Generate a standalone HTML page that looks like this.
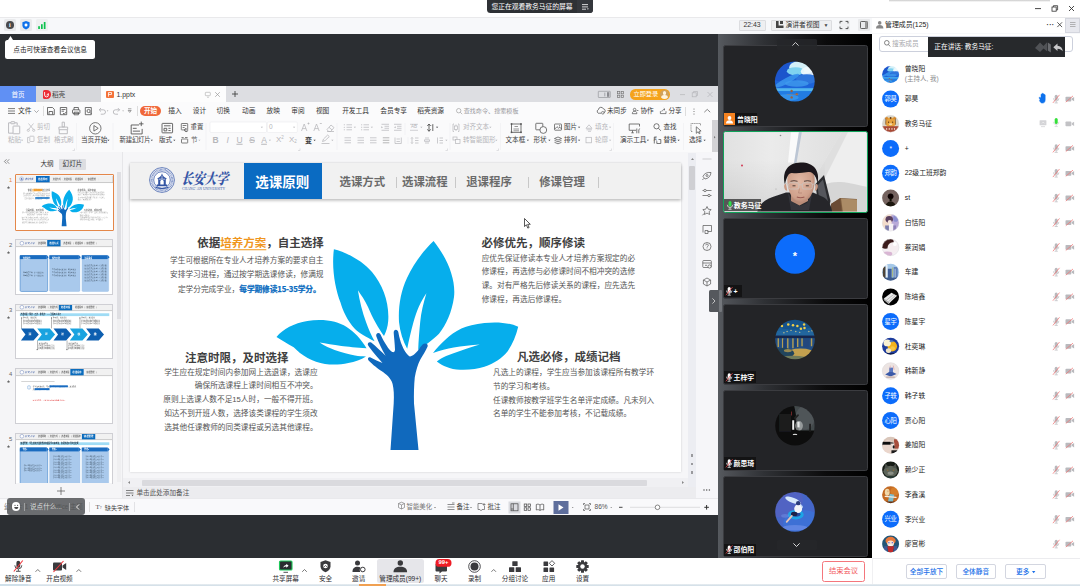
<!DOCTYPE html>
<html lang="zh-CN"><head><meta charset="utf-8"><title>会议</title>
<style>
*{box-sizing:border-box;margin:0;padding:0}
html,body{width:1080px;height:586px;overflow:hidden;background:#fff}
body{position:relative;font-family:"Liberation Sans","Noto Sans CJK SC",sans-serif;color:#222;font-size:6.75px;line-height:1}
.a{position:absolute}
.t{position:absolute;white-space:nowrap;line-height:1}
.c{transform:translate(-50%,-50%)}
.cy{transform:translateY(-50%)}
.r{transform:translate(-100%,-50%)}
svg{position:absolute;overflow:visible}
.g{color:#b9b9bd}
.d{color:#3a3a3e}
</style></head><body>
<div class="a" id="titlebar" style="left:0;top:0;width:1080px;height:17.5px;background:#fff"></div>
<div class="a" style="left:889px;top:0;width:161px;height:2px;background:linear-gradient(#c9c9c9,#fff)"></div>
<div class="a" style="left:487px;top:-3px;width:106px;height:16.3px;background:#2e3135;border-radius:3.5px"></div>
<div class="a" style="left:577px;top:0;width:16px;height:13.3px;background:#34373c;border-radius:0 0 3.5px 0"></div>
<div class="t cy" style="left:491.5px;top:6.8px;color:#fff;font-size:6.8px;letter-spacing:-0.05px">您正在观看教务马征的屏幕</div>
<svg style="left:582px;top:4px" width="7" height="6" viewBox="0 0 7 6"><path d="M0 .6h6M0 2.9h6M0 5.2h4" stroke="#fff" stroke-width=".8" fill="none"/><path d="M5 4.6h1.8L5.9 5.8z" fill="#fff"/></svg>
<svg style="left:1034px;top:4px" width="44" height="10" viewBox="0 0 44 10"><path d="M1 4.6h6" stroke="#333" stroke-width=".9"/><rect x="18" y="3" width="4.2" height="4.2" fill="none" stroke="#333" stroke-width=".8"/><path d="M19.4 3V1.7h4.2v4.2h-1.4" fill="none" stroke="#333" stroke-width=".8"/><path d="M35 2l5 5M40 2l-5 5" stroke="#333" stroke-width=".9"/></svg>
<div class="a" style="left:0;top:-.7px;width:1080px;height:0">
<div class="a" id="toolbar" style="left:0;top:17.5px;width:1080px;height:16.7px;background:#f7f8fa;border-top:1px solid #e9e9eb"></div>
<div class="a" style="left:4px;top:20px;width:11.5px;height:11.5px;background:#e9eaec;border-radius:1.5px"></div>
<div class="a" style="left:20px;top:20px;width:11.5px;height:11.5px;background:#e9eaec;border-radius:1.5px"></div>
<div class="a" style="left:36px;top:20px;width:11.5px;height:11.5px;background:#eef0f1;border-radius:1.5px"></div>
<div class="a" style="left:6px;top:22px;width:7.6px;height:7.6px;border-radius:50%;background:#4a4a4c"></div>
<div class="t c" style="left:9.8px;top:25.9px;color:#fff;font-size:6px;font-weight:bold;font-family:'Liberation Serif',serif">i</div>
<svg style="left:22px;top:21.6px" width="8" height="8.6" viewBox="0 0 8 8.6"><path d="M4 0L7.6 1.3V4.3C7.6 6.4 6 7.9 4 8.6C2 7.9.4 6.4.4 4.3V1.3z" fill="#0e71eb"/><circle cx="4" cy="4.1" r="1.5" fill="#fff"/></svg>
<svg style="left:37.6px;top:22.2px" width="8" height="7" viewBox="0 0 8 7"><rect x=".2" y="4.2" width="1.7" height="2.8" fill="#0cc24e"/><rect x="3" y="2.2" width="1.7" height="4.8" fill="#0cc24e"/><rect x="5.8" y="0" width="1.7" height="7" fill="#0cc24e"/></svg>
<div class="a" style="left:738.5px;top:20.3px;width:27.3px;height:11px;background:#eeeff1;border:0.5px solid #dcdde0;border-radius:1px"></div>
<div class="t c" style="left:752px;top:25.8px;font-size:6.9px;color:#333">22:43</div>
<div class="a" style="left:771.3px;top:20.3px;width:61.2px;height:11px;background:#eeeff1;border:0.5px solid #dcdde0;border-radius:1px"></div>
<svg style="left:776px;top:22px" width="7.5" height="7" viewBox="0 0 7.5 7"><path d="M0 0h2.6v4.4H7.5V7H0z" fill="#444"/><rect x="4" y="0" width="3" height="3" fill="#444"/></svg>
<div class="t cy" style="left:785.5px;top:25.7px;font-size:6.8px;color:#333">演讲者视图</div>
<div class="t c" style="left:826px;top:26px;font-size:5px;color:#444">▼</div>
<div class="a" style="left:838.5px;top:20.3px;width:11.2px;height:11px;background:#eff0f2;border-radius:1px"></div>
<svg style="left:840px;top:21.5px" width="8" height="8" viewBox="0 0 8 8"><path d="M0 2.4V0.4H2.4M5.6 .4H8V2.4M8 5.6V7.6H5.6M2.4 7.6H0V5.6" fill="none" stroke="#444" stroke-width=".9"/></svg>
<div class="a" style="left:857.5px;top:19.8px;width:12px;height:11.5px;background:#e9eaec;border-radius:1px"></div>
<svg style="left:859.5px;top:21.5px" width="8" height="8" viewBox="0 0 8 8"><rect x=".5" y=".5" width="7" height="7" rx=".8" fill="none" stroke="#555" stroke-width=".9"/><rect x="5" y=".5" width="2.5" height="7" fill="#999"/></svg>
<div class="a" style="left:872px;top:18.5px;width:208px;height:15px;background:#fff"></div>
<svg style="left:875.5px;top:21.3px" width="7.4" height="7.4" viewBox="0 0 7.4 7.4"><circle cx="3.7" cy="1.9" r="1.8" fill="#888"/><path d="M0 7.4C0 4.8 1.6 4 3.7 4S7.4 4.8 7.4 7.4z" fill="#888"/></svg>
<div class="t cy" style="left:885px;top:25.6px;font-size:6.9px;color:#222">管理成员(125)</div>
<div class="t c" style="left:1050.5px;top:24.5px;font-size:7px;color:#333;letter-spacing:.3px;font-weight:bold">···</div>
<svg style="left:1056.5px;top:22.3px" width="5.4" height="5.4" viewBox="0 0 5.4 5.4"><path d="M.3 .3l4.8 4.8M5.1 .3L.3 5.1" stroke="#333" stroke-width=".8"/></svg>
<div class="a" style="left:1064.5px;top:18.5px;width:15.5px;height:15px;background:#e7e8ee;border:0.5px solid #d4d6de"></div>
<svg style="left:1069.5px;top:23px" width="5.5" height="5" viewBox="0 0 5.5 5"><path d="M0 .5h5.5M0 2.5h5.5M0 4.5h5.5" stroke="#999" stroke-width=".7"/></svg></div>
<div class="a" id="dark" style="left:0;top:33.5px;width:718px;height:524px;background:#2b2e32"></div>
<div class="a" style="left:5px;top:39.8px;width:90px;height:19px;background:#fff;border-radius:2.5px"></div>
<svg style="left:7.5px;top:36.3px" width="5" height="4" viewBox="0 0 5 4"><path d="M0 4L2.5 0L5 4z" fill="#fff"/></svg>
<div class="t cy" style="left:13.2px;top:49.5px;font-size:6.72px;color:#222">点击可快速查看会议信息</div>
<div class="a" id="wps" style="left:0;top:86.2px;width:718px;height:428.3px;background:#f6f6f8"></div>
<div class="a" style="left:0;top:86.2px;width:718px;height:15.4px;background:#dddee2"></div>
<div class="a" style="left:0;top:86.2px;width:36px;height:15.4px;background:#6090f4"></div>
<div class="t c" style="left:18px;top:94.5px;font-size:6.6px;color:#fff;">首页</div>
<div class="a" style="left:36px;top:86.2px;width:65px;height:15.4px;background:#d6d7db"></div>
<div class="a" style="left:43px;top:90.2px;width:7.6px;height:8.4px;border-radius:1.5px 4.2px 4.2px 1.5px;background:#ec2a34"></div>
<svg style="left:44.3px;top:91.6px" width="5" height="5.4" viewBox="0 0 5 5.4"><path d="M.6 0V3a1.9 1.9 0 0 0 3.8 0V1.6L2.6 3" fill="none" stroke="#fff" stroke-width=".9"/></svg>
<div class="t cy" style="left:52px;top:94.6px;font-size:6.6px;color:#444;">稻壳</div>
<div class="a" style="left:101px;top:86.2px;width:125px;height:15.4px;background:#fdfdfd"></div>
<div class="a" style="left:106px;top:90.6px;width:7.6px;height:7.6px;border-radius:1px;background:#f4733a"></div>
<svg style="left:107.8px;top:92.2px" width="4" height="4.6" viewBox="0 0 4 4.6"><path d="M.5 4.6V.5H3.5V2.5H.5" fill="none" stroke="#fff" stroke-width=".8"/></svg>
<div class="t cy" style="left:116.5px;top:94.6px;font-size:6.9px;color:#333;">1.pptx</div>
<svg style="left:204.5px;top:92px" width="6" height="5.5" viewBox="0 0 6 5.5"><rect x=".3" y=".3" width="5" height="3.4" rx=".6" fill="none" stroke="#aaa" stroke-width=".6"/><path d="M2 5.2h2" stroke="#aaa" stroke-width=".6"/></svg>
<svg style="left:215px;top:92px" width="5" height="5" viewBox="0 0 5 5"><path d="M.2 .2l4.6 4.6M4.8 .2L.2 4.8" stroke="#999" stroke-width=".7"/></svg>
<svg style="left:231.5px;top:91px" width="6" height="6" viewBox="0 0 6 6"><path d="M3 0V6M0 3H6" stroke="#444" stroke-width=".9"/></svg>
<svg style="left:598px;top:90.6px" width="13" height="7" viewBox="0 0 13 7"><rect x=".3" y=".3" width="12" height="6.2" rx=".5" fill="none" stroke="#8a8b90" stroke-width=".6"/><rect x="9" y="1.2" width="2.3" height="4.6" fill="#8a8b90"/><path d="M6.8 1.6V5.4" stroke="#8a8b90" stroke-width=".7"/></svg>
<svg style="left:617px;top:90.8px" width="7" height="7" viewBox="0 0 7 7"><g fill="none" stroke="#777" stroke-width=".7"><rect x=".4" y=".4" width="2.4" height="2.4"/><rect x="4.2" y=".4" width="2.4" height="2.4"/><rect x=".4" y="4.2" width="2.4" height="2.4"/><rect x="4.2" y="4.2" width="2.4" height="2.4"/></g></svg>
<div class="a" style="left:630.3px;top:89px;width:40px;height:10.5px;border-radius:5.3px;background:#f5a31b"></div>
<div class="t cy" style="left:633.5px;top:94.4px;font-size:6.2px;color:#fff;">立即登录</div>
<div class="a" style="left:660px;top:89.8px;width:9px;height:9px;border-radius:50%;background:#cfa15d;overflow:hidden">
<div class="a" style="left:2.7px;top:1.4px;width:3.6px;height:3.6px;border-radius:50%;background:#fff3dc"></div>
<div class="a" style="left:1.2px;top:5.5px;width:6.6px;height:6px;border-radius:50%;background:#fff3dc"></div></div>
<svg style="left:680px;top:90.5px" width="34" height="7" viewBox="0 0 34 7"><g stroke="#b5b6ba" stroke-width=".7" fill="none"><path d="M0 3.6h5"/><rect x="12.2" y="1.8" width="4" height="4"/><path d="M13.5 1.8V.5h4v4h-1.3"/><path d="M27.5 1l5 5M32.5 1l-5 5"/></g></svg>
<div class="a" style="left:0;top:101.7px;width:718px;height:18.5px;background:#fbfbfc"></div>
<svg style="left:8px;top:108px" width="7" height="6" viewBox="0 0 7 6"><path d="M0 .6h7M0 3h7M0 5.4h7" stroke="#444" stroke-width=".7"/></svg>
<div class="t cy" style="left:18px;top:111.3px;font-size:6.75px;color:#333;">文件</div>
<svg style="left:33.5px;top:110px" width="5" height="3" viewBox="0 0 5 3"><path d="M.3 .3L2.5 2.5L4.7 .3" fill="none" stroke="#777" stroke-width=".6"/></svg>
<div class="a" style="left:43px;top:106px;width:.6px;height:10px;background:#ddd"></div>
<svg style="left:0;top:0" width="718" height="586" viewBox="0 0 718 586"><g fill="none" stroke="#444" stroke-width=".75"><path d="M47.5 107.5h5l1.8 1.8v5.4h-6.8z"/><path d="M49 114.5v-3h3.6v3"/><path d="M60.3 107.5h6.4v7.2h-6.4z"/><path d="M61.5 109.5h4M61.5 111.2h2.5M63 113l1.2 1.2 2.2-2.4"/><rect x="72.5" y="109.8" width="7.4" height="3.6" rx=".6"/><path d="M74 109.8v-2.3h4.4v2.3M74 112.2h4.4v2.6H74z"/><path d="M85.3 107.5h6v7.2h-6z"/><circle cx="88.6" cy="111" r="1.6"/><path d="M89.8 112.2l1.6 1.7"/></g><g fill="none" stroke="#a9a9ad" stroke-width=".75"><path d="M99.3 109.8h4a2.2 2.2 0 0 1 0 4.4h-2.5"/><path d="M101 108l-1.8 1.8L101 111.6"/><path d="M119.5 109.8h-4a2.2 2.2 0 0 0 0 4.4h2.5"/><path d="M117.8 108l1.8 1.8-1.8 1.8"/></g><path d="M106.8 110.5h1.6l-.8 1z" fill="#999"/><path d="M122.3 110.5h1.6l-.8 1z" fill="#999"/><path d="M128 108.8h3.4M128.2 110.5h3l-1.5 1.9z" fill="none" stroke="#666" stroke-width=".6"/></svg>
<div class="a" style="left:137px;top:106px;width:.6px;height:10px;background:#ddd"></div>
<div class="a" style="left:139.7px;top:106px;width:21.6px;height:10.2px;border-radius:5.1px;background:#f0683a"></div>
<div class="t c" style="left:150.5px;top:111.2px;font-size:6.6px;color:#fff;font-weight:bold">开始</div>
<div class="t c" style="left:175px;top:111.3px;font-size:6.7px;color:#333;">插入</div>
<div class="t c" style="left:199.5px;top:111.3px;font-size:6.7px;color:#333;">设计</div>
<div class="t c" style="left:223.3px;top:111.3px;font-size:6.7px;color:#333;">切换</div>
<div class="t c" style="left:248.7px;top:111.3px;font-size:6.7px;color:#333;">动画</div>
<div class="t c" style="left:273.3px;top:111.3px;font-size:6.7px;color:#333;">放映</div>
<div class="t c" style="left:298px;top:111.3px;font-size:6.7px;color:#333;">审阅</div>
<div class="t c" style="left:322.6px;top:111.3px;font-size:6.7px;color:#333;">视图</div>
<div class="t c" style="left:355.5px;top:111.3px;font-size:6.7px;color:#333;">开发工具</div>
<div class="t c" style="left:393.7px;top:111.3px;font-size:6.7px;color:#333;">会员专享</div>
<div class="t c" style="left:430.7px;top:111.3px;font-size:6.7px;color:#333;">稻壳资源</div>
<svg style="left:456px;top:107.6px" width="6.5" height="6.5" viewBox="0 0 6.5 6.5"><circle cx="2.7" cy="2.7" r="2.2" fill="none" stroke="#999" stroke-width=".65"/><path d="M4.3 4.3L6.2 6.2" stroke="#999" stroke-width=".65"/></svg>
<div class="t cy" style="left:463.7px;top:111.3px;font-size:6.1px;color:#9a9a9e;">查找命令、搜索模板</div>
<svg style="left:598px;top:107.8px" width="7" height="6.5" viewBox="0 0 7 6.5"><path d="M5.8 4.8a2 2 0 0 0 -.4-3.9 2.6 2.6 0 0 0-5 .8A1.8 1.8 0 0 0 1.8 5.2H3" fill="none" stroke="#444" stroke-width=".7"/><circle cx="4.8" cy="4.8" r="1.3" fill="none" stroke="#444" stroke-width=".6"/></svg>
<div class="t cy" style="left:607px;top:111.3px;font-size:6.6px;color:#333;">未同步</div>
<svg style="left:632px;top:108px" width="6.5" height="6" viewBox="0 0 6.5 6"><circle cx="2.6" cy="1.6" r="1.3" fill="none" stroke="#444" stroke-width=".65"/><path d="M.3 5.7C.3 3.9 1.3 3.3 2.6 3.3S4.9 3.9 4.9 5.7zM4.6 2.5h1.8" fill="none" stroke="#444" stroke-width=".65"/></svg>
<div class="t cy" style="left:640.5px;top:111.3px;font-size:6.6px;color:#333;">协作</div>
<svg style="left:659.5px;top:108px" width="7" height="6" viewBox="0 0 7 6"><path d="M.4 3.2V5.6H6V3.2M1.8 3.6C2.2 2 3.4 1.4 4.6 1.4M3.8 .3L5 1.4 3.8 2.5" fill="none" stroke="#444" stroke-width=".65"/></svg>
<div class="t cy" style="left:668.5px;top:111.3px;font-size:6.6px;color:#333;">分享</div>
<div class="a" style="left:685px;top:106.5px;width:.6px;height:9px;background:#ddd"></div>
<svg style="left:692.5px;top:107.8px" width="2" height="7" viewBox="0 0 2 7"><circle cx="1" cy="1" r=".55" fill="#666"/><circle cx="1" cy="3.5" r=".55" fill="#666"/><circle cx="1" cy="6" r=".55" fill="#666"/></svg>
<svg style="left:703.5px;top:109.3px" width="6.5" height="3.5" viewBox="0 0 6.5 3.5"><path d="M.3 3.2L3.25 .4L6.2 3.2" fill="none" stroke="#555" stroke-width=".7"/></svg>
<div class="a" style="left:0;top:120.2px;width:718px;height:31.8px;background:#fafafb"></div>
<div class="t c" style="left:215.5px;top:140.3px;font-size:8.5px;color:#b6b6ba;font-weight:bold">B</div>
<div class="t c" style="left:227.8px;top:140.3px;font-size:8.5px;color:#b6b6ba;font-style:italic">I</div>
<div class="t c" style="left:239.5px;top:140.3px;font-size:8.5px;color:#b6b6ba;text-decoration:underline">U</div>
<div class="t c" style="left:252px;top:140.3px;font-size:8.5px;color:#b6b6ba;text-decoration:line-through">S</div>
<div class="t c" style="left:264px;top:140.3px;font-size:8.5px;color:#b6b6ba;text-decoration:underline">A</div>
<div class="t cy" style="left:276px;top:140.3px;font-size:8px;color:#b6b6ba;">X<sup style="font-size:4.5px;vertical-align:3px">2</sup></div>
<div class="t cy" style="left:289px;top:140.3px;font-size:8px;color:#b6b6ba;">X<sub style="font-size:4.5px;vertical-align:-1.5px">2</sub></div>
<div class="t c" style="left:308.5px;top:140.2px;font-size:7px;color:#333;font-weight:bold">变</div>
<div class="t c" style="left:414px;top:127px;font-size:4.5px;color:#b6b6ba;">AB</div>
<div class="t cy" style="left:463px;top:127.3px;font-size:6.5px;color:#b6b6ba;">对齐文本</div>
<div class="t cy" style="left:463px;top:140.3px;font-size:6.5px;color:#b6b6ba;">转智能图形</div>
<div class="t c" style="left:655.3px;top:139.6px;font-size:4.5px;color:#555;">A</div>
<svg style="left:0;top:0" width="718" height="586" viewBox="0 0 718 586"><g transform="translate(14.2 128) scale(1.15) translate(-14.2 -128)"><g fill="none" stroke="#b6b6ba" stroke-width=".8"><path d="M11.5 123.5h-2.2v9h4.2"/><path d="M16.8 125.6v-2.1h-2.3"/><rect x="11.3" y="122.5" width="3.4" height="1.8" rx=".4"/><rect x="13.2" y="126.3" width="5.8" height="6.7" rx=".4" fill="#fafafb"/></g></g><path d="M21 139.8h2.2l-1.1 1.3z" fill="#b6b6ba"/><g fill="none" stroke="#b6b6ba" stroke-width=".7"><path d="M28.5 123.5l5 6M33.5 123.5l-5 6"/><circle cx="28.3" cy="130.3" r="1.1"/><circle cx="33.7" cy="130.3" r="1.1"/><rect x="29.8" y="136.2" width="4.2" height="5.3" rx=".5"/><path d="M29.8 142.7h-2.2v-5.3h1.4"/></g><g transform="translate(62.5 128) scale(1.12) translate(-62.5 -128)"><g fill="none" stroke="#b6b6ba" stroke-width=".8"><path d="M62.2 122.8h2v4.2h-2z"/><path d="M59.3 127.2h7.8v2.3h-7.8z"/><path d="M59.6 129.8v3.3h7.2v-3.3"/></g></g><path d="M76.5 123v27" stroke="#efeff1" stroke-width=".6"/><g fill="none" stroke="#555" stroke-width=".8"><circle cx="95.3" cy="128.3" r="5.7"/><path d="M93.9 125.5v5.6l4.3-2.8z"/></g><path d="M107.3 139.8h2.2l-1.1 1.3z" fill="#3c3c40"/><path d="M113 123v27" stroke="#efeff1" stroke-width=".6"/><g transform="translate(137 128) scale(1.12) translate(-137 -128)"><g fill="none" stroke="#555" stroke-width=".8"><path d="M138.8 125.3h-7v8h9.8v-4.5"/><path d="M133.3 128.3h3.4M133.3 130.8h6.4"/><path d="M140.8 122.3v4M138.8 124.3h4"/></g></g><path d="M150.7 139.8h2.2l-1.1 1.3z" fill="#3c3c40"/><g transform="translate(167.3 128) scale(1.1) translate(-167.3 -128)"><g fill="none" stroke="#555" stroke-width=".8"><rect x="162.5" y="123.8" width="9.6" height="8.6" rx=".5"/><path d="M164.3 126h6M164.3 128.3h2.5v2.3h-2.5zM168.3 128.3h2M168.3 130.3h2"/></g></g><path d="M173.2 139.8h2.2l-1.1 1.3z" fill="#3c3c40"/><g fill="none" stroke="#555" stroke-width=".75"><rect x="181.3" y="123.5" width="6.4" height="6.4" rx=".4"/><path d="M182.6 125.5h3.8M182.6 127.5h2"/><path d="M186.5 128.5a1.6 1.6 0 1 0 1.3 1.8" stroke="#444"/></g><g fill="none" stroke="#555" stroke-width=".75"><path d="M181.5 137.5h2.2M185 137.5h2.6"/><rect x="181.5" y="139" width="6.2" height="4" rx=".4"/></g><path d="M198.3 139.8h2.2l-1.1 1.3z" fill="#b6b6ba"/><path d="M206 123v27" stroke="#efeff1" stroke-width=".6"/><rect x="210" y="122" width="56.5" height="10.5" rx="1" fill="#fff" stroke="#ebebee" stroke-width=".6"/><rect x="267.3" y="122" width="30" height="10.5" rx="1" fill="#fff" stroke="#ebebee" stroke-width=".6"/><path d="M260.8 126.8h2.2l-1.1 1.3z" fill="#b6b6ba"/><path d="M293 126.8h2.2l-1.1 1.3z" fill="#b6b6ba"/><g fill="none" stroke="#b6b6ba" stroke-width=".75"><path d="M301.5 131l2.7-7 2.7 7M302.5 128.6h3.4M307.5 123.5h2M308.5 122.5v2"/><path d="M313.8 131l2.7-7 2.7 7M314.8 128.6h3.4M319.8 123.5h2"/><path d="M327 129.5l4-4.5 3 2.6-3.3 3.9h-2.2zM329 127.3l3 2.6M327 131.5h7"/></g><path d="M268.8 139.8h2.2l-1.1 1.3z" fill="#b6b6ba"/><path d="M313.5 139.8h2.2l-1.1 1.3z" fill="#3c3c40"/><g fill="none" stroke="#b6b6ba" stroke-width=".75"><path d="M322.5 141.5l1-2.5 4.2-4 1.6 1.6-4.2 4zM321.5 143.5h8"/></g><path d="M331.3 139.8h2.2l-1.1 1.3z" fill="#b6b6ba"/><path d="M337 123v27" stroke="#efeff1" stroke-width=".6"/><path d="M346.5 124.8h5.5" stroke="#b6b6ba" stroke-width=".7"/><path d="M346.5 127.3h5.5" stroke="#b6b6ba" stroke-width=".7"/><path d="M346.5 129.8h5.5" stroke="#b6b6ba" stroke-width=".7"/><circle cx="344.3" cy="124.8" r=".55" fill="#b6b6ba"/><circle cx="344.3" cy="127.3" r=".55" fill="#b6b6ba"/><circle cx="344.3" cy="129.8" r=".55" fill="#b6b6ba"/><path d="M353.8 126.8h2.2l-1.1 1.3z" fill="#b6b6ba"/><path d="M363.5 124.8h5.5" stroke="#b6b6ba" stroke-width=".7"/><path d="M363.5 127.3h5.5" stroke="#b6b6ba" stroke-width=".7"/><path d="M363.5 129.8h5.5" stroke="#b6b6ba" stroke-width=".7"/><path d="M361 124.8h1.2" stroke="#b6b6ba" stroke-width=".7"/><path d="M361 127.3h1.2" stroke="#b6b6ba" stroke-width=".7"/><path d="M361 129.8h1.2" stroke="#b6b6ba" stroke-width=".7"/><path d="M370.8 126.8h2.2l-1.1 1.3z" fill="#b6b6ba"/><path d="M381.5 124.3h7.5" stroke="#b6b6ba" stroke-width=".7"/><path d="M381.5 130.3h7.5" stroke="#b6b6ba" stroke-width=".7"/><path d="M384.5 126.3h4.5" stroke="#b6b6ba" stroke-width=".7"/><path d="M384.5 128.3h4.5" stroke="#b6b6ba" stroke-width=".7"/><path d="M381.3 126.3l1.7 1-1.7 1z" fill="#b6b6ba"/><path d="M394 124.3h7.5" stroke="#b6b6ba" stroke-width=".7"/><path d="M394 130.3h7.5" stroke="#b6b6ba" stroke-width=".7"/><path d="M397 126.3h4.5" stroke="#b6b6ba" stroke-width=".7"/><path d="M397 128.3h4.5" stroke="#b6b6ba" stroke-width=".7"/><path d="M395.7 126.3l-1.7 1 1.7 1z" fill="#b6b6ba"/><path d="M405 123v12" stroke="#efeff1" stroke-width=".6"/><path d="M410 124.3h8M410 130.3h8" stroke="#b6b6ba" stroke-width=".6"/><path d="M420.3 126.8h2.2l-1.1 1.3z" fill="#b6b6ba"/><g fill="none" stroke="#444" stroke-width=".8"><path d="M429 124v7.2M427.3 126l1.7-2 1.7 2M427.3 129.3l1.7 2 1.7-2"/><path d="M432.8 124.5v6.5M432 125.3l.8-.8" /></g><path d="M436 126.8h2.2l-1.1 1.3z" fill="#3c3c40"/><path d="M344.5 137.8h6.5" stroke="#b6b6ba" stroke-width=".7"/><path d="M344.5 140.3h6.5" stroke="#b6b6ba" stroke-width=".7"/><path d="M344.5 142.8h6.5" stroke="#b6b6ba" stroke-width=".7"/><path d="M357.5 137.8h6.5" stroke="#b6b6ba" stroke-width=".7"/><path d="M357.5 140.3h6.5" stroke="#b6b6ba" stroke-width=".7"/><path d="M357.5 142.8h6.5" stroke="#b6b6ba" stroke-width=".7"/><path d="M370 137.8h6.5" stroke="#b6b6ba" stroke-width=".7"/><path d="M370 140.3h6.5" stroke="#b6b6ba" stroke-width=".7"/><path d="M370 142.8h6.5" stroke="#b6b6ba" stroke-width=".7"/><path d="M382.8 137.8h6.5" stroke="#999" stroke-width=".7"/><path d="M382.8 140.3h6.5" stroke="#999" stroke-width=".7"/><path d="M382.8 142.8h6.5" stroke="#999" stroke-width=".7"/><g fill="none" stroke="#b6b6ba" stroke-width=".7"><path d="M395 137.5v6M401.3 137.5v6M396.5 139h3.4M396.5 141.5h3.4M395 143.5h6.3"/></g><path d="M408 137v7" stroke="#efeff1" stroke-width=".6"/><g fill="none" stroke="#b6b6ba" stroke-width=".7"><path d="M412 137.5v6M411 138.5l1-1 1 1M411 142.5l1 1 1-1"/><path d="M415 138h3.5M415 140.5h3.5M415 143h3.5"/><path d="M425 138h4M425 143h4M424.5 139.8h5v1.6h-5z"/><path d="M437.5 137.5v6"/><path d="M439.5 138h3.5M439.5 140.5h3.5M439.5 143h3.5"/></g><path d="M445.3 139.8h2.2l-1.1 1.3z" fill="#b6b6ba"/><path d="M450 123v27" stroke="#efeff1" stroke-width=".6"/><g fill="none" stroke="#b6b6ba" stroke-width=".7"><path d="M453 124v7.5M459 124v7.5M453 124h1M458 124h1M453 131.5h1M458 131.5h1"/><rect x="454.6" y="126" width="2.8" height="3.4"/><path d="M456 124.5v1.5M456 129.5v1.5"/><rect x="453" y="137" width="4" height="3"/><rect x="455.5" y="139.5" width="4.5" height="4" fill="#fafafb"/></g><path d="M489.3 126.8h2.2l-1.1 1.3z" fill="#b6b6ba"/><path d="M495.3 139.8h2.2l-1.1 1.3z" fill="#b6b6ba"/><path d="M500.5 123v27" stroke="#efeff1" stroke-width=".6"/><g fill="none" stroke="#555" stroke-width=".8"><rect x="511.5" y="124" width="9.5" height="8.3"/><path d="M514.5 126.5h3.5M513.5 129h5.5M513.5 130.8h5.5" stroke-width=".6"/></g><rect x="510.7" y="123.2" width="1.6" height="1.6" fill="#555"/><rect x="510.7" y="131.5" width="1.6" height="1.6" fill="#555"/><rect x="520.2" y="123.2" width="1.6" height="1.6" fill="#555"/><rect x="520.2" y="131.5" width="1.6" height="1.6" fill="#555"/><path d="M526.8 139.8h2.2l-1.1 1.3z" fill="#3c3c40"/><g fill="none" stroke="#555" stroke-width=".8"><rect x="535.8" y="123.3" width="7" height="6.5" rx=".5"/><circle cx="543.3" cy="130" r="3.4" fill="#fafafb"/></g><path d="M548.3 139.8h2.2l-1.1 1.3z" fill="#3c3c40"/><g fill="none" stroke="#555" stroke-width=".75"><rect x="554.5" y="124" width="7" height="6.2" rx=".5"/><path d="M554.8 129l2.2-2.3 1.6 1.5 1.3-1 1.6 1.8"/></g><circle cx="559.6" cy="125.8" r=".6" fill="#555"/><path d="M578 126.8h2.2l-1.1 1.3z" fill="#3c3c40"/><g fill="none" stroke="#555" stroke-width=".75"><path d="M554.5 138.5l3.5-1.5 3.5 1.5-3.5 1.5zM554.5 140.3l3.5 1.5 3.5-1.5M554.5 142.3l3.5 1.5 3.5-1.5"/></g><path d="M578 139.8h2.2l-1.1 1.3z" fill="#3c3c40"/><g fill="none" stroke="#b6b6ba" stroke-width=".7"><path d="M586 128.3l3-3.5 3 3.5zM586.5 129.8h5.5M588 131.3h3"/><rect x="586" y="137.3" width="5.5" height="5.5"/></g><path d="M609 126.8h2.2l-1.1 1.3z" fill="#b6b6ba"/><path d="M609 139.8h2.2l-1.1 1.3z" fill="#b6b6ba"/><path d="M613.5 123v27" stroke="#efeff1" stroke-width=".6"/><g fill="none" stroke="#555" stroke-width=".8"><path d="M636 130.3h-6.8v-6.3h10.3v2.5"/><path d="M633.8 132.8h-2.5M632.5 130.5v2.3"/><path d="M636.8 133.3v-4.8M638.8 133.3v-3.3l.8-1.5"/></g><path d="M646.8 139.8h2.2l-1.1 1.3z" fill="#3c3c40"/><g fill="none" stroke="#555" stroke-width=".8"><circle cx="656.5" cy="126.3" r="2.6"/><path d="M658.5 128.3l2.3 2.5"/><path d="M654.3 143.5v-6.5M654.3 137h2.5M658.5 139.5h2.3v4h-4v-2.3"/></g><path d="M677.5 139.8h2.2l-1.1 1.3z" fill="#3c3c40"/><path d="M683.5 123v27" stroke="#efeff1" stroke-width=".6"/><g fill="none" stroke="#555" stroke-width=".7"><path d="M692.3 131.5h-1.3v-8h9.5v2.5" stroke-dasharray="1.2 .9"/><path d="M696.3 126.8v6.5l1.7-1.5 1.2 2 .9-.5-1.1-2 2.1-.3z" stroke-width=".75"/></g><path d="M703.5 139.8h2.2l-1.1 1.3z" fill="#3c3c40"/><path d="M74.5 148.5v2h-2" fill="none" stroke="#c4c4c8" stroke-width=".5"/><path d="M300 148.5v2h-2" fill="none" stroke="#c4c4c8" stroke-width=".5"/><path d="M447.5 148.5v2h-2" fill="none" stroke="#c4c4c8" stroke-width=".5"/><path d="M498.5 148.5v2h-2" fill="none" stroke="#c4c4c8" stroke-width=".5"/><path d="M611.5 148.5v2h-2" fill="none" stroke="#c4c4c8" stroke-width=".5"/></svg>
<div class="t cy" style="left:8px;top:140.3px;font-size:6.6px;color:#b6b6ba;">粘贴</div>
<div class="t cy" style="left:37px;top:127.3px;font-size:6.5px;color:#b6b6ba;">剪切</div>
<div class="t cy" style="left:37px;top:140.3px;font-size:6.5px;color:#b6b6ba;">复制</div>
<div class="t cy" style="left:54px;top:140.3px;font-size:6.5px;color:#b6b6ba;">格式刷</div>
<div class="t cy" style="left:81px;top:140.3px;font-size:6.6px;color:#3c3c40;">当页开始</div>
<div class="t cy" style="left:119.5px;top:140.3px;font-size:6.4px;color:#3c3c40;letter-spacing:-.2px">新建幻灯片</div>
<div class="t cy" style="left:159px;top:140.3px;font-size:6.6px;color:#3c3c40;">版式</div>
<div class="t cy" style="left:190.5px;top:127.3px;font-size:6.4px;color:#3c3c40;">重置</div>
<div class="t cy" style="left:191px;top:140.3px;font-size:6.5px;color:#666;">节</div>
<div class="t cy" style="left:269px;top:127.3px;font-size:6.5px;color:#b6b6ba;">0</div>
<div class="t cy" style="left:505.5px;top:140.3px;font-size:6.6px;color:#3c3c40;">文本框</div>
<div class="t cy" style="left:533.5px;top:140.3px;font-size:6.6px;color:#3c3c40;">形状</div>
<div class="t cy" style="left:564px;top:127.3px;font-size:6.5px;color:#3c3c40;">图片</div>
<div class="t cy" style="left:564px;top:140.3px;font-size:6.5px;color:#3c3c40;">排列</div>
<div class="t cy" style="left:595px;top:127.3px;font-size:6.5px;color:#b6b6ba;">填充</div>
<div class="t cy" style="left:595px;top:140.3px;font-size:6.5px;color:#b6b6ba;">轮廓</div>
<div class="t cy" style="left:620px;top:140.3px;font-size:6.6px;color:#3c3c40;">演示工具</div>
<div class="t cy" style="left:663.5px;top:127.3px;font-size:6.5px;color:#3c3c40;">查找</div>
<div class="t cy" style="left:663.5px;top:140.3px;font-size:6.5px;color:#3c3c40;">替换</div>
<div class="t cy" style="left:689px;top:140.3px;font-size:6.6px;color:#3c3c40;">选择</div></div>
<div class="a" style="left:711.5px;top:120.2px;width:6.5px;height:31.8px;background:#d2d2d5"></div>
<svg style="left:714.2px;top:136px" width="1.5" height="2.5" viewBox="0 0 1.5 2.5"><path d="M0 0l1.5 1.25L0 2.5z" fill="#777"/></svg>
<div class="a" style="left:0;top:152px;width:122.5px;height:347px;background:#f5f5f7;border-right:.7px solid #e6e6e9"></div>
<svg style="left:3.5px;top:158.5px" width="5.5" height="5" viewBox="0 0 5.5 5"><path d="M2.5 .3L.4 2.5l2.1 2.2M5.2 .3L3.1 2.5l2.1 2.2" fill="none" stroke="#555" stroke-width=".65"/></svg>
<div class="t c" style="left:47px;top:164.2px;font-size:6.6px;color:#333;">大纲</div>
<div class="a" style="left:58.8px;top:158.6px;width:27.4px;height:11px;background:#dcdde1;border-radius:1px"></div>
<div class="t c" style="left:72.5px;top:164.2px;font-size:6.6px;color:#333;">幻灯片</div>
<div class="a" style="left:117px;top:172px;width:3.5px;height:310px;background:#efeff1"></div>
<div class="a" style="left:117px;top:172px;width:3.5px;height:147px;background:#dfdfe3"></div>
<div class="a" style="left:16px;top:175.5px;width:96.6px;height:54.3px;overflow:hidden;background:#fff">
<div class="a" style="left:0;top:0;width:551px;height:309px;transform-origin:0 0;transform:scale(0.17532)">
<div class="a" style="left:-130px;top:-163px;width:718px;height:586px">
<svg style="left:0;top:0" width="718" height="586" viewBox="0 0 718 586"><g>
<path d="M276.5 337C283 329 294 323.5 307.3 321.1C316 319.6 326 319.8 334.6 321.7C343 323.8 351 329 357 335.5C361 340 364 344 366.5 348.2C357 347.5 347 346.8 341.4 346C333 344.8 326 343.6 319.6 342.6C325 346 330 348.5 334.6 350C342 352.6 349 354.4 355 355.5C359 356.1 362 356.4 366 356.4C361 359.5 355 361.6 348.3 363C341 364.6 333 365 325 364C313 362.5 301 355 293.7 347.3C287 343.5 281 340 276.5 337Z" fill="#06aeec"/>
<path d="M518.2 326.8C509 322.6 497 321.6 484.4 323C475 324.2 467 326.2 461.4 328.4C455 331.5 450 335.3 446.1 339.1C441 344 436.5 348.5 433 352.9C440 350.5 447 348.8 453.7 347.6C462 346 471 345 479.8 344.5C473 346.5 467 348.5 461.4 350.6C456 352.6 451 354.2 446.1 356C442.5 357.6 439.5 359.5 436.8 361.4C441 364.5 443.5 365.8 446.1 366.8C451 369 456 370 461.4 369.8C470 370 478 368.8 484.4 366.8C494 363.5 502 358 507.5 351.4C512.5 344.5 516 336 518.2 326.8Z" fill="#06aeec"/>
<path d="M333.9 249.3C345 252 362 260 372 272C383 285 389.5 303 388.2 321C387.8 327 386 332 384 336.1C379 329 372.5 318 368 307C365 300 361 295 357.9 290.2C359.5 301 362.5 312 366 322C368.5 329 371.5 336 374.6 341.2C366 337 359 333 355 329C347 320 343 311 340.5 302.5C335 288 331.5 268 333.9 249.3Z" fill="#06aeec"/>
<path d="M433.6 241C424 250 414 263 407 278C400.5 292 398.2 307 399 322C400 332 403 341 407.2 348.7C409 340 411 331 413.5 322C416.5 311 421 301 426.4 293.3C423.5 303 421 313 420.2 322C419.3 331 418.5 341 418.2 349.9C424 346 433 340 439 333.8C446 325 452 312 454 297C456 280 448 259 433.6 241Z" fill="#06aeec"/>
<path d="M390.5 450L393.7 403.5C394.2 395 393.8 389 392.6 384C391 378 386.5 374.5 381.5 371C378.5 369 372.5 364.5 368.6 360.4C367 358.6 368.6 356.4 370.6 357.4C374.5 359.5 378.5 361.5 382.5 363C377.5 357.5 371.5 350.5 368.2 345.6C366.8 343.2 369.2 341.2 371.2 342.6C376 346.5 381 351.5 385.6 355.8C382 349.5 378.5 342.5 376.3 336.2C375.4 333.2 378.8 331.8 380.4 334.2C382.5 338.5 384.5 342.5 386.6 345.4C388.2 348 390 350.5 392.2 352C394 352.6 395 351.5 395 349.5C394.8 343.5 394 337.5 393.7 332.8C393.5 328.9 397.8 328.7 398.4 332.4C399.2 337 400.4 341.5 402.2 345.8C403.8 349.8 406 353.8 409.2 356.3C412 357 415.5 353.5 418 350.5C419.8 348.2 421.2 346 422.6 344.6C424.6 342.4 428.6 343.6 427.6 346.6C425.8 351 422.6 355.5 420.2 359.8C418 364 416 370.5 414.8 377.3C414 385 413.8 394 414 403.5L418.5 450Z" fill="#1069bd"/>
</g></svg>
<div class="a" style="left:130px;top:163px;width:551px;height:35.8px;background:#f1f1f1;box-shadow:0 1.5px 3px rgba(0,0,0,.28)"></div>
<svg style="left:149.4px;top:166.6px" width="26" height="26" viewBox="0 0 26 26"><circle cx="13" cy="13" r="12.4" fill="#fbfbfd" stroke="#3f5ea8" stroke-width=".8"/><circle cx="13" cy="13" r="10.3" fill="none" stroke="#6f86c0" stroke-width="2.2" stroke-dasharray=".7 .55"/><circle cx="13" cy="13" r="8.3" fill="#fff" stroke="#3f5ea8" stroke-width=".8"/><path d="M13 6.2c-.6 2.5-2.3 4.2-4.8 5.3l1 .9v5.2h-1.4v1.6h10.4v-1.6h-1.4v-5.2l1-.9c-2.5-1.1-4.2-2.8-4.8-5.3z" fill="#3455a4"/><path d="M11.3 17.6v-3.2a1.7 1.7 0 0 1 3.4 0v3.2z" fill="#fff"/><path d="M9.8 12.2h6.4M13 8.5v3.5" stroke="#fff" stroke-width=".6"/><path d="M6.5 20.2q6.5 2.5 13 0" stroke="#3455a4" stroke-width="1.1" fill="none"/></svg>
<div class="t" style="left:181.5px;top:171px;font-size:11.6px;color:#3556a6;font-family:'Noto Serif CJK SC',serif;font-weight:900;font-style:italic;letter-spacing:.15px;transform-origin:0 0;transform:scale(1,1.28) skewX(-6deg)">长安大学</div>
<div class="t cy" style="left:182px;top:189.7px;font-size:3.7px;color:#3f5ea8;font-family:'Liberation Serif',serif;letter-spacing:.02px">CHANG' AN UNIVERSITY</div>
<div class="a" style="left:243.8px;top:163px;width:77.8px;height:35.8px;background:#0a6bc2"></div>
<div class="t c" style="left:282.2px;top:182.6px;font-size:13.5px;color:#fff;font-weight:bold">选课原则</div>
<div class="t c" style="left:362.3px;top:183px;font-size:11.4px;color:#6a6a6a;font-weight:bold">选课方式</div>
<div class="t c" style="left:424.8px;top:183px;font-size:11.4px;color:#6a6a6a;font-weight:bold">选课流程</div>
<div class="t c" style="left:489px;top:183px;font-size:11.4px;color:#6a6a6a;font-weight:bold">退课程序</div>
<div class="t c" style="left:562px;top:183px;font-size:11.4px;color:#6a6a6a;font-weight:bold">修课管理</div>
<div class="a" style="left:395.95px;top:177px;width:.7px;height:10.5px;background:#c8c8c8"></div>
<div class="a" style="left:455.34999999999997px;top:177px;width:.7px;height:10.5px;background:#c8c8c8"></div>
<div class="a" style="left:527.85px;top:177px;width:.7px;height:10.5px;background:#c8c8c8"></div>
<div class="a" style="left:597.9499999999999px;top:177px;width:.7px;height:10.5px;background:#c8c8c8"></div>
<div class="a" style="left:0;top:0;width:718px;height:586px;opacity:.72">
<div class="t r" style="left:323.8px;top:243.8px;font-size:11.5px;color:#404040;font-weight:bold;letter-spacing:0px">依据<span style="color:#f0961e;text-decoration:underline;text-decoration-thickness:.8px;text-underline-offset:1.5px">培养方案</span>，自主选择</div>
<div class="t r" style="left:323.5px;top:261px;font-size:7.68px;color:#555">学生可根据所在专业人才培养方案的要求自主</div>
<div class="t r" style="left:323.5px;top:274.7px;font-size:7.68px;color:#555">安排学习进程，通过按学期选课修读，修满规</div>
<div class="t r" style="left:320.5px;top:289.2px;font-size:7.68px;color:#555">定学分完成学业，<span style="color:#0b6cc0;font-weight:bold;font-size:7.7px;letter-spacing:-.1px;font-family:Noto Sans CJK SC,sans-serif;-webkit-text-stroke:.25px #0b6cc0">每学期修读15-35学分。</span></div>
<div class="t cy" style="left:481.5px;top:244px;font-size:11.5px;color:#404040;font-weight:bold;letter-spacing:0px">必修优先，顺序修读</div>
<div class="t cy" style="left:481.7px;top:258.6px;font-size:7.68px;color:#555">应优先保证修读本专业人才培养方案规定的必</div>
<div class="t cy" style="left:481.7px;top:272.3px;font-size:7.68px;color:#555">修课程，再选修与必修课时间不相冲突的选修</div>
<div class="t cy" style="left:481.7px;top:286px;font-size:7.68px;color:#555">课。对有严格先后修读关系的课程，应先选先</div>
<div class="t cy" style="left:481.7px;top:299.70000000000005px;font-size:7.68px;color:#555">修课程，再选后修课程。</div>
<div class="t r" style="left:288.6px;top:358.7px;font-size:11.5px;color:#404040;font-weight:bold;letter-spacing:0px">注意时限，及时选择</div>
<div class="t r" style="left:317.6px;top:372.7px;font-size:7.68px;color:#555">学生应在规定时间内参加网上选退课，选课应</div>
<div class="t r" style="left:317.6px;top:386.4px;font-size:7.68px;color:#555">确保所选课程上课时间相互不冲突。</div>
<div class="t r" style="left:317.6px;top:400.09999999999997px;font-size:7.68px;color:#555">原则上选课人数不足15人时，一般不得开班。</div>
<div class="t r" style="left:317.6px;top:413.79999999999995px;font-size:7.68px;color:#555">如达不到开班人数，选择该类课程的学生须改</div>
<div class="t r" style="left:317.6px;top:427.5px;font-size:7.68px;color:#555">选其他任课教师的同类课程或另选其他课程。</div>
<div class="t cy" style="left:517px;top:358.2px;font-size:11.5px;color:#404040;font-weight:bold;letter-spacing:0px">凡选必修，成绩记档</div>
<div class="t cy" style="left:493px;top:373px;font-size:7.68px;color:#555">凡选上的课程，学生应当参加该课程所有教学环</div>
<div class="t cy" style="left:493px;top:386.75px;font-size:7.68px;color:#555">节的学习和考核。</div>
<div class="t cy" style="left:493px;top:400.5px;font-size:7.68px;color:#555">任课教师按教学班学生名单评定成绩。凡未列入</div>
<div class="t cy" style="left:493px;top:414.25px;font-size:7.68px;color:#555">名单的学生不能参加考核，不记载成绩。</div></div>
<div class="a" style="left:230px;top:236px;width:50px;height:13px;background:#f0961e;opacity:.85"></div>
<div class="a" style="left:240px;top:283px;width:82px;height:10px;background:#0b6cc0;opacity:.8"></div></div></div></div>
<div class="a" style="left:14.7px;top:174.1px;width:99.2px;height:57.2px;border:1.4px solid #e4874a;border-radius:1px"></div>
<div class="a" style="left:16px;top:239.9px;width:96.6px;height:54.3px;overflow:hidden;background:#fff">
<div class="a" style="left:0;top:0;width:551px;height:309px;transform-origin:0 0;transform:scale(0.17532)">
<div class="a" style="left:-130px;top:-163px;width:718px;height:586px">
<div class="a" style="left:130px;top:163px;width:551px;height:35.8px;background:#f1f1f1;box-shadow:0 2px 4px rgba(0,0,0,.25)"></div>
<div class="a" style="left:152px;top:169.5px;width:23px;height:23px;border-radius:50%;border:2px solid #3b5ba5;background:#fff"></div>
<div class="t cy" style="left:180.5px;top:180px;font-size:14px;color:#3b5ba5;font-family:'Noto Serif CJK SC',serif;font-weight:bold;font-style:italic">长安大学</div>
<div class="t cy" style="left:256px;top:182px;font-size:11.4px;color:#666;font-weight:bold">选课原则</div>
<div class="a" style="left:312px;top:177px;width:1.5px;height:10.5px;background:#999"></div>
<div class="a" style="left:308px;top:163px;width:76px;height:35.8px;background:#0b6cbd"></div>
<div class="t cy" style="left:319px;top:182px;font-size:13.4px;color:#fff;font-weight:bold">选课方式</div>
<div class="t cy" style="left:400px;top:182px;font-size:11.4px;color:#666;font-weight:bold">选课流程</div>
<div class="a" style="left:456px;top:177px;width:1.5px;height:10.5px;background:#999"></div>
<div class="t cy" style="left:466px;top:182px;font-size:11.4px;color:#666;font-weight:bold">退课程序</div>
<div class="a" style="left:522px;top:177px;width:1.5px;height:10.5px;background:#999"></div>
<div class="t cy" style="left:532px;top:182px;font-size:11.4px;color:#666;font-weight:bold">修课管理</div>
<div class="a" style="left:588px;top:177px;width:1.5px;height:10.5px;background:#999"></div>
<div class="a" style="left:152px;top:250px;width:160px;height:208px;background:#a9c9ec;border:3px solid #2a74c4;border-radius:8px"></div>
<div class="a" style="left:152px;top:250px;width:152px;height:22px;background:#1a6cc0"></div>
<div class="a" style="left:304px;top:250px;width:0;height:0;border-left:12px solid #1a6cc0;border-top:11px solid transparent;border-bottom:11px solid transparent"></div>
<div class="a" style="left:320px;top:250px;width:176px;height:208px;background:#a9c9ec;border:1.5px solid #9fc3ea;border-radius:8px"></div>
<div class="a" style="left:320px;top:250px;width:168px;height:22px;background:#1a6cc0"></div>
<div class="a" style="left:488px;top:250px;width:0;height:0;border-left:12px solid #1a6cc0;border-top:11px solid transparent;border-bottom:11px solid transparent"></div>
<div class="a" style="left:505px;top:250px;width:155px;height:208px;background:#a9c9ec;border:1.5px solid #9fc3ea;border-radius:8px"></div>
<div class="a" style="left:505px;top:250px;width:147px;height:22px;background:#1a6cc0"></div>
<div class="a" style="left:652px;top:250px;width:0;height:0;border-left:12px solid #1a6cc0;border-top:11px solid transparent;border-bottom:11px solid transparent"></div>
<div class="t cy" style="left:168px;top:270px;font-size:11px;color:#fff;font-weight:bold">选课操作</div>
<div class="t cy" style="left:336px;top:270px;font-size:11px;color:#fff;font-weight:bold">操作步骤</div>
<div class="t cy" style="left:520px;top:270px;font-size:11px;color:#fff;font-weight:bold">注意事项</div>
<div class="t cy" style="left:170px;top:350px;font-size:9px;color:#345">登录教务系统，进入选课界面</div>
<div class="t cy" style="left:170px;top:366px;font-size:9px;color:#345">登录教务系统，进入选课界面</div>
<div class="t cy" style="left:336px;top:330px;font-size:9px;color:#345">查看本学期可选课程，按要求选课</div>
<div class="t cy" style="left:336px;top:348px;font-size:9px;color:#345">查看本学期可选课程，按要求选课</div>
<div class="t cy" style="left:336px;top:366px;font-size:9px;color:#345">查看本学期可选课程，按要求选课</div>
<div class="t cy" style="left:520px;top:310px;font-size:9px;color:#345">选课结束后请核对个人课表信息</div>
<div class="t cy" style="left:520px;top:327px;font-size:9px;color:#345">选课结束后请核对个人课表信息</div>
<div class="t cy" style="left:520px;top:344px;font-size:9px;color:#345">选课结束后请核对个人课表信息</div>
<div class="t cy" style="left:520px;top:361px;font-size:9px;color:#345">选课结束后请核对个人课表信息</div>
<div class="t cy" style="left:520px;top:378px;font-size:9px;color:#345">选课结束后请核对个人课表信息</div>
<div class="t cy" style="left:520px;top:395px;font-size:9px;color:#345">选课结束后请核对个人课表信息</div></div></div></div>
<div class="a" style="left:16px;top:304.4px;width:96.6px;height:54.3px;overflow:hidden;background:#fff">
<div class="a" style="left:0;top:0;width:551px;height:309px;transform-origin:0 0;transform:scale(0.17532)">
<div class="a" style="left:-130px;top:-163px;width:718px;height:586px">
<div class="a" style="left:130px;top:163px;width:551px;height:35.8px;background:#f1f1f1;box-shadow:0 2px 4px rgba(0,0,0,.25)"></div>
<div class="a" style="left:152px;top:169.5px;width:23px;height:23px;border-radius:50%;border:2px solid #3b5ba5;background:#fff"></div>
<div class="t cy" style="left:180.5px;top:180px;font-size:14px;color:#3b5ba5;font-family:'Noto Serif CJK SC',serif;font-weight:bold;font-style:italic">长安大学</div>
<div class="t cy" style="left:256px;top:182px;font-size:11.4px;color:#666;font-weight:bold">选课原则</div>
<div class="a" style="left:312px;top:177px;width:1.5px;height:10.5px;background:#999"></div>
<div class="t cy" style="left:322px;top:182px;font-size:11.4px;color:#666;font-weight:bold">选课方式</div>
<div class="a" style="left:378px;top:177px;width:1.5px;height:10.5px;background:#999"></div>
<div class="a" style="left:374px;top:163px;width:76px;height:35.8px;background:#0b6cbd"></div>
<div class="t cy" style="left:385px;top:182px;font-size:13.4px;color:#fff;font-weight:bold">选课流程</div>
<div class="t cy" style="left:466px;top:182px;font-size:11.4px;color:#666;font-weight:bold">退课程序</div>
<div class="a" style="left:522px;top:177px;width:1.5px;height:10.5px;background:#999"></div>
<div class="t cy" style="left:532px;top:182px;font-size:11.4px;color:#666;font-weight:bold">修课管理</div>
<div class="a" style="left:588px;top:177px;width:1.5px;height:10.5px;background:#999"></div>
<div class="a" style="left:152px;top:216px;width:510px;height:16px;background:#9fdcf5"></div>
<div class="t cy" style="left:156px;top:224px;font-size:10px;color:#123;font-weight:bold">选课流程（预选、正选、补退选）——全程网上进行</div>
<div class="a" style="left:160px;top:240px;width:5px;height:5px;background:#222"></div>
<div class="a" style="left:162px;top:244px;width:1.5px;height:58px;background:#333"></div>
<div class="t cy" style="left:170px;top:243px;font-size:9px;color:#222">第1阶段：选课说明</div>
<div class="t cy" style="left:170px;top:255px;font-size:7px;color:#444">学生按规定时间登录系统完成选课</div>
<div class="t cy" style="left:170px;top:265px;font-size:7px;color:#444">学生按规定时间登录系统完成选课</div>
<div class="t cy" style="left:170px;top:275px;font-size:7px;color:#444">学生按规定时间登录系统完成选课</div>
<div class="a" style="left:330px;top:240px;width:5px;height:5px;background:#222"></div>
<div class="a" style="left:332px;top:244px;width:1.5px;height:58px;background:#333"></div>
<div class="t cy" style="left:340px;top:243px;font-size:9px;color:#222">第2阶段：选课说明</div>
<div class="t cy" style="left:340px;top:255px;font-size:7px;color:#444">学生按规定时间登录系统完成选课</div>
<div class="t cy" style="left:340px;top:265px;font-size:7px;color:#444">学生按规定时间登录系统完成选课</div>
<div class="t cy" style="left:340px;top:275px;font-size:7px;color:#444">学生按规定时间登录系统完成选课</div>
<div class="a" style="left:492px;top:240px;width:5px;height:5px;background:#222"></div>
<div class="a" style="left:494px;top:244px;width:1.5px;height:58px;background:#333"></div>
<div class="t cy" style="left:502px;top:243px;font-size:9px;color:#222">第3阶段：选课说明</div>
<div class="t cy" style="left:502px;top:255px;font-size:7px;color:#444">学生按规定时间登录系统完成选课</div>
<div class="t cy" style="left:502px;top:265px;font-size:7px;color:#444">学生按规定时间登录系统完成选课</div>
<div class="t cy" style="left:502px;top:275px;font-size:7px;color:#444">学生按规定时间登录系统完成选课</div>
<svg style="left:0;top:0" width="718" height="586" viewBox="0 0 718 586"><path d="M158 303h72l30 34-30 34h-72l26-34z" fill="#0e5fb0"/><path d="M251 303h72l30 34-30 34h-72l26-34z" fill="#1aa3e0"/><path d="M344 303h72l30 34-30 34h-72l26-34z" fill="#0e5fb0"/><path d="M437 303h72l30 34-30 34h-72l26-34z" fill="#1aa3e0"/><path d="M530 303h72l30 34-30 34h-72l26-34z" fill="#0e5fb0"/></svg>
<div class="t c" style="left:210px;top:337px;font-size:16px;color:#fff;font-weight:bold">预</div>
<div class="t c" style="left:303px;top:337px;font-size:16px;color:#fff;font-weight:bold">正</div>
<div class="t c" style="left:396px;top:337px;font-size:16px;color:#fff;font-weight:bold">补</div>
<div class="t c" style="left:489px;top:337px;font-size:16px;color:#fff;font-weight:bold">核</div>
<div class="t c" style="left:582px;top:337px;font-size:16px;color:#fff;font-weight:bold">缴</div>
<div class="a" style="left:250px;top:371px;width:1.5px;height:52px;background:#333"></div>
<div class="a" style="left:248px;top:421px;width:5px;height:5px;background:#222"></div>
<div class="t cy" style="left:258px;top:386px;font-size:9px;color:#222">选课结果查询</div>
<div class="t cy" style="left:258px;top:399px;font-size:7px;color:#444">核对课表并按时缴纳相关费用</div>
<div class="t cy" style="left:258px;top:409px;font-size:7px;color:#444">核对课表并按时缴纳相关费用</div>
<div class="t cy" style="left:258px;top:419px;font-size:7px;color:#444">核对课表并按时缴纳相关费用</div>
<div class="a" style="left:420px;top:371px;width:1.5px;height:52px;background:#333"></div>
<div class="a" style="left:418px;top:421px;width:5px;height:5px;background:#222"></div>
<div class="t cy" style="left:428px;top:386px;font-size:9px;color:#222">选课结果查询</div>
<div class="t cy" style="left:428px;top:399px;font-size:7px;color:#444">核对课表并按时缴纳相关费用</div>
<div class="t cy" style="left:428px;top:409px;font-size:7px;color:#444">核对课表并按时缴纳相关费用</div>
<div class="t cy" style="left:428px;top:419px;font-size:7px;color:#444">核对课表并按时缴纳相关费用</div></div></div></div>
<div class="a" style="left:16px;top:368.9px;width:96.6px;height:54.3px;overflow:hidden;background:#fff">
<div class="a" style="left:0;top:0;width:551px;height:309px;transform-origin:0 0;transform:scale(0.17532)">
<div class="a" style="left:-130px;top:-163px;width:718px;height:586px">
<div class="a" style="left:130px;top:163px;width:551px;height:35.8px;background:#f1f1f1;box-shadow:0 2px 4px rgba(0,0,0,.25)"></div>
<div class="a" style="left:152px;top:169.5px;width:23px;height:23px;border-radius:50%;border:2px solid #3b5ba5;background:#fff"></div>
<div class="t cy" style="left:180.5px;top:180px;font-size:14px;color:#3b5ba5;font-family:'Noto Serif CJK SC',serif;font-weight:bold;font-style:italic">长安大学</div>
<div class="t cy" style="left:256px;top:182px;font-size:11.4px;color:#666;font-weight:bold">选课原则</div>
<div class="a" style="left:312px;top:177px;width:1.5px;height:10.5px;background:#999"></div>
<div class="t cy" style="left:322px;top:182px;font-size:11.4px;color:#666;font-weight:bold">选课方式</div>
<div class="a" style="left:378px;top:177px;width:1.5px;height:10.5px;background:#999"></div>
<div class="t cy" style="left:388px;top:182px;font-size:11.4px;color:#666;font-weight:bold">选课流程</div>
<div class="a" style="left:444px;top:177px;width:1.5px;height:10.5px;background:#999"></div>
<div class="a" style="left:440px;top:163px;width:76px;height:35.8px;background:#0b6cbd"></div>
<div class="t cy" style="left:451px;top:182px;font-size:13.4px;color:#fff;font-weight:bold">退课程序</div>
<div class="t cy" style="left:532px;top:182px;font-size:11.4px;color:#666;font-weight:bold">修课管理</div>
<div class="a" style="left:588px;top:177px;width:1.5px;height:10.5px;background:#999"></div>
<div class="a" style="left:160px;top:232px;width:190px;height:1.5px;background:#888"></div>
<div class="a" style="left:196px;top:258px;width:16px;height:20px;border:2px solid #2a74c4;border-radius:3px"></div>
<div class="t cy" style="left:226px;top:262px;font-size:9.5px;color:#333">学生在退选阶段，可以<span style="background:#1a6cc0;color:#1a6cc0">登录系统对已选课程进行</span>，选课完成</div>
<div class="t cy" style="left:226px;top:278px;font-size:9.5px;color:#333">后<span style="background:#1a6cc0;color:#1a6cc0">请及时核对个人课表</span></div>
<div class="t cy" style="left:226px;top:340px;font-size:9.5px;color:#d22">退课结束后，已选课程不得无故缺考或放弃。</div></div></div></div>
<div class="a" style="left:16px;top:433.3px;width:96.6px;height:49.7px;overflow:hidden;background:#fff">
<div class="a" style="left:0;top:0;width:551px;height:309px;transform-origin:0 0;transform:scale(0.17532)">
<div class="a" style="left:-130px;top:-163px;width:718px;height:586px">
<div class="a" style="left:130px;top:163px;width:551px;height:35.8px;background:#f1f1f1;box-shadow:0 2px 4px rgba(0,0,0,.25)"></div>
<div class="a" style="left:152px;top:169.5px;width:23px;height:23px;border-radius:50%;border:2px solid #3b5ba5;background:#fff"></div>
<div class="t cy" style="left:180.5px;top:180px;font-size:14px;color:#3b5ba5;font-family:'Noto Serif CJK SC',serif;font-weight:bold;font-style:italic">长安大学</div>
<div class="t cy" style="left:256px;top:182px;font-size:11.4px;color:#666;font-weight:bold">选课原则</div>
<div class="a" style="left:312px;top:177px;width:1.5px;height:10.5px;background:#999"></div>
<div class="t cy" style="left:322px;top:182px;font-size:11.4px;color:#666;font-weight:bold">选课方式</div>
<div class="a" style="left:378px;top:177px;width:1.5px;height:10.5px;background:#999"></div>
<div class="t cy" style="left:388px;top:182px;font-size:11.4px;color:#666;font-weight:bold">选课流程</div>
<div class="a" style="left:444px;top:177px;width:1.5px;height:10.5px;background:#999"></div>
<div class="t cy" style="left:454px;top:182px;font-size:11.4px;color:#666;font-weight:bold">退课程序</div>
<div class="a" style="left:510px;top:177px;width:1.5px;height:10.5px;background:#999"></div>
<div class="a" style="left:506px;top:163px;width:76px;height:35.8px;background:#0b6cbd"></div>
<div class="t cy" style="left:517px;top:182px;font-size:13.4px;color:#fff;font-weight:bold">修课管理</div>
<div class="a" style="left:152px;top:216px;width:510px;height:16px;background:#9fdcf5"></div>
<div class="t cy" style="left:156px;top:224px;font-size:10px;color:#123;font-weight:bold">修课管理：学生应按选课结果参加课程学习和考核，未经批准不得擅自变更</div>
<div class="a" style="left:152px;top:246px;width:160px;height:224px;background:#a9c9ec;border:3px solid #2a74c4;border-radius:8px"></div>
<div class="a" style="left:152px;top:246px;width:152px;height:22px;background:#1a6cc0"></div>
<div class="a" style="left:304px;top:246px;width:0;height:0;border-left:12px solid #1a6cc0;border-top:11px solid transparent;border-bottom:11px solid transparent"></div>
<div class="a" style="left:320px;top:246px;width:176px;height:224px;background:#a9c9ec;border:1.5px solid #9fc3ea;border-radius:8px"></div>
<div class="a" style="left:320px;top:246px;width:168px;height:22px;background:#1a6cc0"></div>
<div class="a" style="left:488px;top:246px;width:0;height:0;border-left:12px solid #1a6cc0;border-top:11px solid transparent;border-bottom:11px solid transparent"></div>
<div class="a" style="left:505px;top:246px;width:155px;height:224px;background:#a9c9ec;border:1.5px solid #9fc3ea;border-radius:8px"></div>
<div class="a" style="left:505px;top:246px;width:147px;height:22px;background:#1a6cc0"></div>
<div class="a" style="left:652px;top:246px;width:0;height:0;border-left:12px solid #1a6cc0;border-top:11px solid transparent;border-bottom:11px solid transparent"></div>
<div class="t cy" style="left:168px;top:257px;font-size:10px;color:#fff;font-weight:bold">管理1</div>
<div class="t cy" style="left:174px;top:350px;font-size:8px;color:#345">学生应按照课表参加课程学习</div>
<div class="t cy" style="left:174px;top:365px;font-size:8px;color:#345">学生应按照课表参加课程学习</div>
<div class="t cy" style="left:174px;top:380px;font-size:8px;color:#345">学生应按照课表参加课程学习</div>
<div class="t cy" style="left:336px;top:257px;font-size:10px;color:#fff;font-weight:bold">管理2</div>
<div class="t cy" style="left:342px;top:300px;font-size:8px;color:#345">学生应按照课表参加课程学习</div>
<div class="t cy" style="left:342px;top:315px;font-size:8px;color:#345">学生应按照课表参加课程学习</div>
<div class="t cy" style="left:342px;top:330px;font-size:8px;color:#345">学生应按照课表参加课程学习</div>
<div class="t cy" style="left:342px;top:345px;font-size:8px;color:#345">学生应按照课表参加课程学习</div>
<div class="t cy" style="left:342px;top:360px;font-size:8px;color:#345">学生应按照课表参加课程学习</div>
<div class="t cy" style="left:342px;top:375px;font-size:8px;color:#345">学生应按照课表参加课程学习</div>
<div class="t cy" style="left:342px;top:390px;font-size:8px;color:#345">学生应按照课表参加课程学习</div>
<div class="t cy" style="left:342px;top:405px;font-size:8px;color:#345">学生应按照课表参加课程学习</div>
<div class="t cy" style="left:342px;top:420px;font-size:8px;color:#345">学生应按照课表参加课程学习</div>
<div class="t cy" style="left:520px;top:257px;font-size:10px;color:#fff;font-weight:bold">管理3</div>
<div class="t cy" style="left:526px;top:300px;font-size:8px;color:#345">学生应按照课表参加课程学习</div>
<div class="t cy" style="left:526px;top:315px;font-size:8px;color:#345">学生应按照课表参加课程学习</div>
<div class="t cy" style="left:526px;top:330px;font-size:8px;color:#345">学生应按照课表参加课程学习</div>
<div class="t cy" style="left:526px;top:345px;font-size:8px;color:#345">学生应按照课表参加课程学习</div>
<div class="t cy" style="left:526px;top:360px;font-size:8px;color:#345">学生应按照课表参加课程学习</div>
<div class="t cy" style="left:526px;top:375px;font-size:8px;color:#345">学生应按照课表参加课程学习</div>
<div class="t cy" style="left:526px;top:390px;font-size:8px;color:#345">学生应按照课表参加课程学习</div>
<div class="t cy" style="left:526px;top:405px;font-size:8px;color:#345">学生应按照课表参加课程学习</div>
<div class="t cy" style="left:526px;top:420px;font-size:8px;color:#345">学生应按照课表参加课程学习</div></div></div></div>
<div class="a" style="left:15.4px;top:239.3px;width:97.8px;height:55.5px;border:.6px solid #cfcfd4;"></div>
<div class="a" style="left:15.4px;top:303.79999999999995px;width:97.8px;height:55.5px;border:.6px solid #cfcfd4;"></div>
<div class="a" style="left:15.4px;top:368.29999999999995px;width:97.8px;height:55.5px;border:.6px solid #cfcfd4;"></div>
<div class="a" style="left:15.4px;top:432.7px;width:97.8px;height:50.900000000000006px;border:.6px solid #cfcfd4;border-bottom:none;"></div>
<div class="t c" style="left:10.7px;top:180.8px;font-size:5.8px;color:#e4874a">1</div>
<svg style="left:6.5px;top:185.8px" width="3" height="3" viewBox="0 0 3.6 3.6"><path d="M1.8 0l.6 1.2 1.2.2-.9.9.2 1.3-1.1-.6-1.1.6.2-1.3-.9-.9 1.2-.2z" fill="#666"/></svg>
<div class="t c" style="left:10.7px;top:246px;font-size:5.8px;color:#666">2</div>
<svg style="left:6.5px;top:251px" width="3" height="3" viewBox="0 0 3.6 3.6"><path d="M1.8 0l.6 1.2 1.2.2-.9.9.2 1.3-1.1-.6-1.1.6.2-1.3-.9-.9 1.2-.2z" fill="#666"/></svg>
<div class="t c" style="left:10.7px;top:310.5px;font-size:5.8px;color:#666">3</div>
<svg style="left:6.5px;top:315.5px" width="3" height="3" viewBox="0 0 3.6 3.6"><path d="M1.8 0l.6 1.2 1.2.2-.9.9.2 1.3-1.1-.6-1.1.6.2-1.3-.9-.9 1.2-.2z" fill="#666"/></svg>
<div class="t c" style="left:10.7px;top:375px;font-size:5.8px;color:#666">4</div>
<svg style="left:6.5px;top:380px" width="3" height="3" viewBox="0 0 3.6 3.6"><path d="M1.8 0l.6 1.2 1.2.2-.9.9.2 1.3-1.1-.6-1.1.6.2-1.3-.9-.9 1.2-.2z" fill="#666"/></svg>
<div class="t c" style="left:10.7px;top:439.5px;font-size:5.8px;color:#666">5</div>
<svg style="left:6.5px;top:444.5px" width="3" height="3" viewBox="0 0 3.6 3.6"><path d="M1.8 0l.6 1.2 1.2.2-.9.9.2 1.3-1.1-.6-1.1.6.2-1.3-.9-.9 1.2-.2z" fill="#666"/></svg>
<svg style="left:57px;top:487px" width="8" height="8" viewBox="0 0 8 8"><path d="M4 0v8M0 4h8" stroke="#444" stroke-width=".65"/></svg>
<div class="a" style="left:130px;top:163px;width:551px;height:309px;background:#fff;box-shadow:0 0 2px rgba(0,0,0,.18)"></div>
<svg style="left:0;top:0" width="718" height="586" viewBox="0 0 718 586"><g>
<path d="M276.5 337C283 329 294 323.5 307.3 321.1C316 319.6 326 319.8 334.6 321.7C343 323.8 351 329 357 335.5C361 340 364 344 366.5 348.2C357 347.5 347 346.8 341.4 346C333 344.8 326 343.6 319.6 342.6C325 346 330 348.5 334.6 350C342 352.6 349 354.4 355 355.5C359 356.1 362 356.4 366 356.4C361 359.5 355 361.6 348.3 363C341 364.6 333 365 325 364C313 362.5 301 355 293.7 347.3C287 343.5 281 340 276.5 337Z" fill="#06aeec"/>
<path d="M518.2 326.8C509 322.6 497 321.6 484.4 323C475 324.2 467 326.2 461.4 328.4C455 331.5 450 335.3 446.1 339.1C441 344 436.5 348.5 433 352.9C440 350.5 447 348.8 453.7 347.6C462 346 471 345 479.8 344.5C473 346.5 467 348.5 461.4 350.6C456 352.6 451 354.2 446.1 356C442.5 357.6 439.5 359.5 436.8 361.4C441 364.5 443.5 365.8 446.1 366.8C451 369 456 370 461.4 369.8C470 370 478 368.8 484.4 366.8C494 363.5 502 358 507.5 351.4C512.5 344.5 516 336 518.2 326.8Z" fill="#06aeec"/>
<path d="M333.9 249.3C345 252 362 260 372 272C383 285 389.5 303 388.2 321C387.8 327 386 332 384 336.1C379 329 372.5 318 368 307C365 300 361 295 357.9 290.2C359.5 301 362.5 312 366 322C368.5 329 371.5 336 374.6 341.2C366 337 359 333 355 329C347 320 343 311 340.5 302.5C335 288 331.5 268 333.9 249.3Z" fill="#06aeec"/>
<path d="M433.6 241C424 250 414 263 407 278C400.5 292 398.2 307 399 322C400 332 403 341 407.2 348.7C409 340 411 331 413.5 322C416.5 311 421 301 426.4 293.3C423.5 303 421 313 420.2 322C419.3 331 418.5 341 418.2 349.9C424 346 433 340 439 333.8C446 325 452 312 454 297C456 280 448 259 433.6 241Z" fill="#06aeec"/>
<path d="M390.5 450L393.7 403.5C394.2 395 393.8 389 392.6 384C391 378 386.5 374.5 381.5 371C378.5 369 372.5 364.5 368.6 360.4C367 358.6 368.6 356.4 370.6 357.4C374.5 359.5 378.5 361.5 382.5 363C377.5 357.5 371.5 350.5 368.2 345.6C366.8 343.2 369.2 341.2 371.2 342.6C376 346.5 381 351.5 385.6 355.8C382 349.5 378.5 342.5 376.3 336.2C375.4 333.2 378.8 331.8 380.4 334.2C382.5 338.5 384.5 342.5 386.6 345.4C388.2 348 390 350.5 392.2 352C394 352.6 395 351.5 395 349.5C394.8 343.5 394 337.5 393.7 332.8C393.5 328.9 397.8 328.7 398.4 332.4C399.2 337 400.4 341.5 402.2 345.8C403.8 349.8 406 353.8 409.2 356.3C412 357 415.5 353.5 418 350.5C419.8 348.2 421.2 346 422.6 344.6C424.6 342.4 428.6 343.6 427.6 346.6C425.8 351 422.6 355.5 420.2 359.8C418 364 416 370.5 414.8 377.3C414 385 413.8 394 414 403.5L418.5 450Z" fill="#1069bd"/>
</g></svg>
<div class="a" style="left:130px;top:163px;width:551px;height:35.8px;background:#f1f1f1;box-shadow:0 1.5px 3px rgba(0,0,0,.28)"></div>
<svg style="left:149.4px;top:166.6px" width="26" height="26" viewBox="0 0 26 26"><circle cx="13" cy="13" r="12.4" fill="#fbfbfd" stroke="#3f5ea8" stroke-width=".8"/><circle cx="13" cy="13" r="10.3" fill="none" stroke="#6f86c0" stroke-width="2.2" stroke-dasharray=".7 .55"/><circle cx="13" cy="13" r="8.3" fill="#fff" stroke="#3f5ea8" stroke-width=".8"/><path d="M13 6.2c-.6 2.5-2.3 4.2-4.8 5.3l1 .9v5.2h-1.4v1.6h10.4v-1.6h-1.4v-5.2l1-.9c-2.5-1.1-4.2-2.8-4.8-5.3z" fill="#3455a4"/><path d="M11.3 17.6v-3.2a1.7 1.7 0 0 1 3.4 0v3.2z" fill="#fff"/><path d="M9.8 12.2h6.4M13 8.5v3.5" stroke="#fff" stroke-width=".6"/><path d="M6.5 20.2q6.5 2.5 13 0" stroke="#3455a4" stroke-width="1.1" fill="none"/></svg>
<div class="t" style="left:181.5px;top:171px;font-size:11.6px;color:#3556a6;font-family:'Noto Serif CJK SC',serif;font-weight:900;font-style:italic;letter-spacing:.15px;transform-origin:0 0;transform:scale(1,1.28) skewX(-6deg)">长安大学</div>
<div class="t cy" style="left:182px;top:189.7px;font-size:3.7px;color:#3f5ea8;font-family:'Liberation Serif',serif;letter-spacing:.02px">CHANG' AN UNIVERSITY</div>
<div class="a" style="left:243.8px;top:163px;width:77.8px;height:35.8px;background:#0a6bc2"></div>
<div class="t c" style="left:282.2px;top:182.6px;font-size:13.5px;color:#fff;font-weight:bold">选课原则</div>
<div class="t c" style="left:362.3px;top:183px;font-size:11.4px;color:#6a6a6a;font-weight:bold">选课方式</div>
<div class="t c" style="left:424.8px;top:183px;font-size:11.4px;color:#6a6a6a;font-weight:bold">选课流程</div>
<div class="t c" style="left:489px;top:183px;font-size:11.4px;color:#6a6a6a;font-weight:bold">退课程序</div>
<div class="t c" style="left:562px;top:183px;font-size:11.4px;color:#6a6a6a;font-weight:bold">修课管理</div>
<div class="a" style="left:395.95px;top:177px;width:.7px;height:10.5px;background:#c8c8c8"></div>
<div class="a" style="left:455.34999999999997px;top:177px;width:.7px;height:10.5px;background:#c8c8c8"></div>
<div class="a" style="left:527.85px;top:177px;width:.7px;height:10.5px;background:#c8c8c8"></div>
<div class="a" style="left:597.9499999999999px;top:177px;width:.7px;height:10.5px;background:#c8c8c8"></div>
<div class="t r" style="left:323.8px;top:243.8px;font-size:11.5px;color:#404040;font-weight:bold;letter-spacing:0px">依据<span style="color:#f0961e;text-decoration:underline;text-decoration-thickness:.8px;text-underline-offset:1.5px">培养方案</span>，自主选择</div>
<div class="t r" style="left:323.5px;top:261px;font-size:7.68px;color:#555">学生可根据所在专业人才培养方案的要求自主</div>
<div class="t r" style="left:323.5px;top:274.7px;font-size:7.68px;color:#555">安排学习进程，通过按学期选课修读，修满规</div>
<div class="t r" style="left:320.5px;top:289.2px;font-size:7.68px;color:#555">定学分完成学业，<span style="color:#0b6cc0;font-weight:bold;font-size:7.7px;letter-spacing:-.1px;font-family:Noto Sans CJK SC,sans-serif;-webkit-text-stroke:.25px #0b6cc0">每学期修读15-35学分。</span></div>
<div class="t cy" style="left:481.5px;top:244px;font-size:11.5px;color:#404040;font-weight:bold;letter-spacing:0px">必修优先，顺序修读</div>
<div class="t cy" style="left:481.7px;top:258.6px;font-size:7.68px;color:#555">应优先保证修读本专业人才培养方案规定的必</div>
<div class="t cy" style="left:481.7px;top:272.3px;font-size:7.68px;color:#555">修课程，再选修与必修课时间不相冲突的选修</div>
<div class="t cy" style="left:481.7px;top:286px;font-size:7.68px;color:#555">课。对有严格先后修读关系的课程，应先选先</div>
<div class="t cy" style="left:481.7px;top:299.70000000000005px;font-size:7.68px;color:#555">修课程，再选后修课程。</div>
<div class="t r" style="left:288.6px;top:358.7px;font-size:11.5px;color:#404040;font-weight:bold;letter-spacing:0px">注意时限，及时选择</div>
<div class="t r" style="left:317.6px;top:372.7px;font-size:7.68px;color:#555">学生应在规定时间内参加网上选退课，选课应</div>
<div class="t r" style="left:317.6px;top:386.4px;font-size:7.68px;color:#555">确保所选课程上课时间相互不冲突。</div>
<div class="t r" style="left:317.6px;top:400.09999999999997px;font-size:7.68px;color:#555">原则上选课人数不足15人时，一般不得开班。</div>
<div class="t r" style="left:317.6px;top:413.79999999999995px;font-size:7.68px;color:#555">如达不到开班人数，选择该类课程的学生须改</div>
<div class="t r" style="left:317.6px;top:427.5px;font-size:7.68px;color:#555">选其他任课教师的同类课程或另选其他课程。</div>
<div class="t cy" style="left:517px;top:358.2px;font-size:11.5px;color:#404040;font-weight:bold;letter-spacing:0px">凡选必修，成绩记档</div>
<div class="t cy" style="left:493px;top:373px;font-size:7.68px;color:#555">凡选上的课程，学生应当参加该课程所有教学环</div>
<div class="t cy" style="left:493px;top:386.75px;font-size:7.68px;color:#555">节的学习和考核。</div>
<div class="t cy" style="left:493px;top:400.5px;font-size:7.68px;color:#555">任课教师按教学班学生名单评定成绩。凡未列入</div>
<div class="t cy" style="left:493px;top:414.25px;font-size:7.68px;color:#555">名单的学生不能参加考核，不记载成绩。</div>
<svg style="left:523.8px;top:217.8px" width="7" height="11" viewBox="0 0 7 11"><path d="M.5 .5V8.5L2.4 6.8l1.4 3.3 1.3-.6-1.4-3.2h2.6z" fill="#fff" stroke="#111" stroke-width=".7"/></svg>
<div class="a" style="left:687.5px;top:152.5px;width:8.5px;height:334px;background:#ecedf2"></div>
<div class="a" style="left:689px;top:165.5px;width:6px;height:24.5px;background:#cfcfd3;border-radius:1px"></div>
<svg style="left:690.5px;top:157.5px" width="3" height="2" viewBox="0 0 3 2"><path d="M0 2L1.5 0L3 2z" fill="#888"/></svg>
<div class="a" style="left:691.3px;top:454.2px;width:1.5px;height:2.5px;background:#9a9a9e"></div>
<div class="a" style="left:691.3px;top:462.5px;width:1.5px;height:2.5px;background:#9a9a9e"></div>
<div class="a" style="left:691.3px;top:471px;width:1.5px;height:2.5px;background:#9a9a9e"></div>
<div class="a" style="left:696px;top:152.5px;width:22px;height:346px;background:#f6f6f9"></div>
<svg style="left:0;top:0" width="718" height="586" viewBox="0 0 718 586"><path d="M702.5 159h9" stroke="#c9c9cc" stroke-width=".9"/><g fill="none" stroke="#555" stroke-width=".7"><path d="M703 176.5c1-3 4-4.5 8-4-.3 3.5-2.5 6-6 6.5zM703.5 178.5l-1 1.5M706 175.5a1 1 0 1 0 2 0a1 1 0 1 0-2 0"/><path d="M702.5 190.5h9M702.5 195.5h9"/><circle cx="705" cy="190.5" r="1.2" fill="#f7f7f8"/><circle cx="709" cy="195.5" r="1.2" fill="#f7f7f8"/><path d="M707 206.5l1.3 2.7 2.9.4-2.1 2 .5 2.9-2.6-1.4-2.6 1.4.5-2.9-2.1-2 2.9-.4zM704 213.5l-1.5 1.8"/><path d="M703 232.5v-7h8.5v6h-4M705 230.5h3v3h-3z"/><circle cx="707" cy="246.5" r="4"/><path d="M705.7 245.3a1.3 1.3 0 1 1 1.9 1.2c-.5.3-.6.6-.6 1.1M707 248.7v.5"/><rect x="702.8" y="260.5" width="8.5" height="7" rx=".8"/><path d="M702.8 263h8.5M705 265.3h2"/><circle cx="709.5" cy="266.5" r="1.6" fill="#f7f7f8"/><path d="M707 278l3.6 2v4l-3.6 2-3.6-2v-4zM707 282l3.6-2M707 282l-3.6-2M707 282v4"/></g></svg>
<div class="a" style="left:709px;top:289.5px;width:9px;height:22.5px;background:#55585d;border-radius:1.5px 0 0 1.5px"></div>
<svg style="left:712px;top:298px" width="3.5" height="6" viewBox="0 0 3.5 6"><path d="M.4 .4L3 3L.4 5.6" fill="none" stroke="#ddd" stroke-width=".8"/></svg>
<div class="a" style="left:123px;top:478px;width:565px;height:8.5px;background:#f0f0f3"></div>
<div class="a" style="left:141.7px;top:479.5px;width:505.6px;height:6.3px;background:#dadade;border-radius:1px"></div>
<svg style="left:127.5px;top:481px" width="2" height="3" viewBox="0 0 2 3"><path d="M2 0L0 1.5L2 3z" fill="#888"/></svg>
<svg style="left:682px;top:481px" width="2" height="3" viewBox="0 0 2 3"><path d="M0 0L2 1.5L0 3z" fill="#888"/></svg>
<div class="a" style="left:123px;top:486.5px;width:573px;height:11.5px;background:#ececef"></div>
<svg style="left:126px;top:490.3px" width="7.5" height="6" viewBox="0 0 7.5 6"><path d="M0 .5h7.5M0 3h7.5M0 5.5h4" stroke="#555" stroke-width=".7"/><path d="M5.5 4.8h2l-1 1.4z" fill="#555"/></svg>
<div class="t cy" style="left:136.5px;top:493.2px;font-size:6.6px;color:#555;">单击此处添加备注</div>
<svg style="left:702.8px;top:489px" width="8" height="2" viewBox="0 0 8 2"><circle cx="1" cy="1" r=".75" fill="#555"/><circle cx="3.7" cy="1" r=".75" fill="#555"/><circle cx="6.4" cy="1" r=".75" fill="#555"/></svg>
<div class="a" style="left:0;top:498px;width:718px;height:16.5px;background:#f9f9fb;border-top:.6px solid #e9e9ec"></div>
<div class="t cy" style="left:4px;top:507.3px;font-size:6.3px;color:#777;">幻灯片 1 / 5</div>
<div class="t cy" style="left:52px;top:507.3px;font-size:6.3px;color:#777;">Office 主题</div>
<div class="a" style="left:88.5px;top:502px;width:.6px;height:10px;background:#ddd"></div>
<div class="t cy" style="left:95.5px;top:507.2px;font-size:7px;color:#555;font-family:'Liberation Serif',serif">T<span style="font-size:4.5px">?</span></div>
<div class="t cy" style="left:104.8px;top:507.8px;font-size:6.1px;color:#444;">缺失字体</div>
<div class="a" style="left:134px;top:502px;width:.6px;height:10px;background:#e2e2e5"></div>
<svg style="left:0;top:0" width="718" height="586" viewBox="0 0 718 586"><g fill="none" stroke="#777" stroke-width=".65"><path d="M398.5 503.5l3-1.3 3 1.3v4l-3 1.5-3-1.5zM398.5 503.5l3 1.4 3-1.4M401.5 505v4"/><path d="M447.5 504.5h7M447.5 507h7M447.5 509.5h7" stroke="#555"/><path d="M452 503l2.5 0" stroke="#555"/><path d="M482.5 503.5h-4.5v6h2l1 1.3 1-1.3h2.5v-3.5" stroke="#555"/><path d="M484 503v3M482.5 504.5h3" stroke="#555"/></g><rect x="508.5" y="501.5" width="12" height="12" fill="#dadbe0"/><g fill="none" stroke="#444" stroke-width=".7"><rect x="511" y="503.8" width="7" height="7"/><path d="M513.3 503.8v7M511 509h2.3"/><rect x="524.2" y="504" width="2.5" height="2.5"/><rect x="528" y="504" width="2.5" height="2.5"/><rect x="524.2" y="507.8" width="2.5" height="2.5"/><rect x="528" y="507.8" width="2.5" height="2.5"/><path d="M540 505c-1-1-2.5-1-3.7-.5v5.5c1.2-.5 2.7-.5 3.7.5 1-1 2.5-1 3.7-.5v-5.5c-1.2-.5-2.7-.5-3.7.5zM540 505v5.5"/></g><rect x="553.5" y="501" width="15" height="13" fill="#5e6e9c"/><path d="M558.5 504.3v6.4l5-3.2z" fill="#fff"/><path d="M571.8 507h1.8l-.9 1.1z" fill="#777"/><g fill="none" stroke="#555" stroke-width=".7"><path d="M583.5 505v-1.5h1.5M589 503.5h1.5v1.5M590.5 509v1.5h-1.5M585 510.5h-1.5v-1.5"/><rect x="585" y="505" width="4" height="4"/></g><path d="M610.3 507h1.8l-.9 1.1z" fill="#777"/><path d="M619 507.3h3.5" stroke="#333" stroke-width=".9"/><path d="M630 507.3h70" stroke="#c9c9cc" stroke-width=".6"/><circle cx="657.5" cy="507.3" r="2.3" fill="#fff" stroke="#555" stroke-width=".7"/><path d="M704.3 507.3h4.6M706.6 505v4.6" stroke="#333" stroke-width="1"/></svg>
<div class="t cy" style="left:406.5px;top:507.3px;font-size:6.4px;color:#777;">智能美化</div>
<svg style="left:434px;top:506.8px" width="2" height="1.3" viewBox="0 0 2 1.3"><path d="M0 0h2L1 1.3z" fill="#777"/></svg>
<div class="t cy" style="left:456.5px;top:507.3px;font-size:6.5px;color:#444;">备注</div>
<svg style="left:470.2px;top:506.8px" width="2" height="1.3" viewBox="0 0 2 1.3"><path d="M0 0h2L1 1.3z" fill="#777"/></svg>
<div class="t cy" style="left:487.5px;top:507.3px;font-size:6.5px;color:#444;">批注</div>
<div class="t cy" style="left:594.5px;top:507.3px;font-size:6.6px;color:#555;">86%</div>
<div class="a" style="left:7.3px;top:498px;width:78px;height:16.8px;background:rgba(80,82,85,.84);border-radius:3px"></div>
<div class="a" style="left:11.5px;top:502.3px;width:8.6px;height:8.6px;border-radius:50%;background:#fff"></div>
<svg style="left:11.5px;top:502.3px" width="8.6" height="8.6" viewBox="0 0 8.6 8.6"><circle cx="3" cy="3.3" r=".6" fill="#444"/><circle cx="5.6" cy="3.3" r=".6" fill="#444"/><path d="M2.2 5h4.2a2.1 2.1 0 0 1-4.2 0z" fill="#444"/></svg>
<div class="a" style="left:23.5px;top:502.5px;width:.6px;height:8px;background:rgba(255,255,255,.35)"></div>
<div class="t cy" style="left:30px;top:507px;font-size:6.6px;color:#dcdcdc;">说点什么...</div>
<div class="a" style="left:69.3px;top:502.5px;width:.6px;height:8px;background:rgba(255,255,255,.35)"></div>
<svg style="left:75.5px;top:504px" width="3.5" height="6" viewBox="0 0 3.5 6"><path d="M3.1 .4L.5 3l2.6 2.6" fill="none" stroke="#fff" stroke-width=".9"/></svg>
<div class="a" id="vstrip" style="left:718px;top:33.5px;width:154px;height:524px;background:linear-gradient(90deg,#565a5f 0,#505358 4%,#2f3135 30%,#0b0b0c 70%,#000 100%)"></div>
<div class="a" style="left:719.3px;top:290px;width:2.6px;height:22px;background:#74777c;border-radius:1px"></div>
<div class="a" style="left:723px;top:45.4px;width:144.5px;height:81.2px;background:#232427;border:.7px solid #3b3c40;border-radius:2.5px"></div>
<div class="a" style="left:722.5px;top:131px;width:145.5px;height:82px;background:#dcdcdc;border:1.3px solid #10a35a;border-radius:2.5px;overflow:hidden" id="activevid"></div>
<div class="a" style="left:723px;top:217.6px;width:144.5px;height:81.2px;background:#232427;border:.7px solid #3b3c40;border-radius:2.5px"></div>
<div class="a" style="left:723px;top:303.7px;width:144.5px;height:81.2px;background:#232427;border:.7px solid #3b3c40;border-radius:2.5px"></div>
<div class="a" style="left:723px;top:389.8px;width:144.5px;height:81.2px;background:#232427;border:.7px solid #3b3c40;border-radius:2.5px"></div>
<div class="a" style="left:723px;top:475.9px;width:144.5px;height:81.2px;background:#232427;border:.7px solid #3b3c40;border-radius:2.5px"></div>
<svg style="left:0;top:0" width="1080" height="586" viewBox="0 0 1080 586"><defs><linearGradient id="wall" x1="0" x2="1" y1="0" y2="0"><stop offset="0" stop-color="#dfdfdf"/><stop offset=".35" stop-color="#ebebeb"/><stop offset=".7" stop-color="#e2e2e2"/><stop offset="1" stop-color="#dcdcdc"/></linearGradient><radialGradient id="face" cx=".45" cy=".45" r=".65"><stop offset="0" stop-color="#e2b9a5"/><stop offset=".7" stop-color="#cfa08b"/><stop offset="1" stop-color="#a87a68"/></radialGradient><linearGradient id="vshade" x1="0" x2="0" y1="0" y2="1"><stop offset="0" stop-color="#000" stop-opacity="0"/><stop offset="1" stop-color="#000" stop-opacity=".1"/></linearGradient><filter id="vb" x="-5%" y="-5%" width="110%" height="110%"><feGaussianBlur stdDeviation=".55"/></filter><clipPath id="vclip"><rect x="724" y="132.3" width="142.5" height="79.3" rx="1.5"/></clipPath></defs><g clip-path="url(#vclip)"><g filter="url(#vb)"><rect x="715" y="125" width="160" height="95" fill="url(#wall)"/><path d="M844 128L817 174L822 215H875V128z" fill="#eeeeee"/><path d="M844 128L817 174L819 190L850 128z" fill="#d9d9d9" opacity=".7"/><path d="M826 184c10-4 22-2 45 4v30h-45z" fill="#cfcfcf" opacity=".8"/><rect x="715" y="160" width="110" height="60" fill="url(#vshade)"/><path d="M791.5 128h8.5l-5.5 34.5h-6.5z" fill="#fafafa"/><path d="M799.5 128h3l-6 35h-2.5z" fill="#bcc6d4"/><circle cx="742" cy="165.5" r="1" fill="#d23a55"/><circle cx="780.5" cy="135.5" r=".8" fill="#8a8a8a"/><circle cx="776" cy="189" r=".5" fill="#9a9a9a"/><path d="M815.5 184l8.5-9 6.5 26-2 9h-10z" fill="#2b2c2f"/><path d="M817.5 185.5l5.5-6 5 22-8 5z" fill="#54565b"/><path d="M831 204l9-6 17 1v14h-26z" fill="#7b5b3e"/><path d="M841 198.5l16 1v13.5h-14z" fill="#ab8b66"/><path d="M831 204l9-5.5 2 14.5h-11z" fill="#6a4c34"/><path d="M757 214c1.5-10 8-15 20-18.5l9-3h27l9 4c6 2.5 9.5 8 10.5 17.5z" fill="#26272c"/><path d="M788 193l6 10 6 3 7-3 5-9-3 16h-18z" fill="#34353b"/><path d="M791 190h17v11l-8.5 4.5-8.5-4.5z" fill="#b98b77"/><path d="M787.3 180c0-9 5-14 13.8-14s13.6 5 13.6 14c0 6-1.2 11-3.7 15.5-2.3 4-6 6.5-9.9 6.5s-7.6-2.5-9.9-6.5c-2.5-4.5-3.9-9.5-3.9-15.5z" fill="url(#face)"/><path d="M786 184c-1.6-.5-2.3 1.5-1.6 4 .6 2 1.7 3 2.8 2.6zM816 184c1.6-.5 2.3 1.5 1.6 4-.6 2-1.7 3-2.8 2.6z" fill="#c99882"/><path d="M785 184.5c-3.2-12.5 2.5-21.7 15.5-22 12.7-.3 20 7.5 17 21.5-.6-5.5-2.3-8.6-4.7-10.6-1.5-1.2-3-1.6-4.6-1.3-5.5 1-11.5 1.4-16.4.9-1.8 0-3 1-3.8 2.5-1.5 2.5-2.5 5.5-3 9z" fill="#1b191a"/><path d="M790.5 181.3q3.5-1.3 7 0M804 181.3q3.5-1.3 7 0" stroke="#4a3a35" stroke-width=".9" fill="none"/><g fill="none" stroke="#c9c5c2" stroke-width=".75"><rect x="788.8" y="182.8" width="10" height="6.2" rx="1.8"/><rect x="802.3" y="182.8" width="10" height="6.2" rx="1.8"/><path d="M798.8 184.8h3.5M788.8 184.5l-2.8-1M812.3 184.5l3.5-1"/></g><path d="M792.5 185.8h3M805.8 185.8h3" stroke="#3a2c28" stroke-width=".9"/><path d="M799.5 188.5l-1 4.5h3.5" stroke="#b58572" stroke-width=".7" fill="none"/><path d="M796.8 197q3.8 1.4 7.6 0" stroke="#9a5a52" stroke-width="1.1" fill="none"/></g></g><defs><filter id="bl045" x="-10%" y="-10%" width="120%" height="120%"><feGaussianBlur stdDeviation="0.45"/></filter><filter id="bl06" x="-10%" y="-10%" width="120%" height="120%"><feGaussianBlur stdDeviation="0.6"/></filter></defs><clipPath id="ct1"><circle cx="794.8" cy="81.5" r="19.9"/></clipPath><g clip-path="url(#ct1)"><g filter="url(#bl06)"><rect x="762.96" y="49.66" width="63.68" height="63.68" fill="#1f63d8"/><ellipse cx="782.86" cy="71.55" rx="15.92" ry="9.95" fill="#1a55cc"/><ellipse cx="802.76" cy="67.17" rx="13.53" ry="6.77" fill="#d4f0f8"/><ellipse cx="795.6" cy="71.15" rx="8.76" ry="3.98" fill="#7fd2f0"/><ellipse cx="808.73" cy="71.55" rx="7.96" ry="4.78" fill="#f0f8fc" opacity="0.9"/><ellipse cx="806.74" cy="79.11" rx="10.75" ry="4.78" fill="#2d74dc"/><ellipse cx="786.84" cy="80.7" rx="13.93" ry="2.79" fill="#3a94ec" opacity="0.9" transform="rotate(-28 786.84 80.7)"/><ellipse cx="796.79" cy="83.49" rx="11.94" ry="3.18" fill="#3f9aee" opacity="0.8"/><rect x="762.96" y="87.87" width="63.68" height="27.86" fill="#207ce2"/><rect x="762.96" y="88.27" width="63.68" height="2.79" fill="#5cc0f0" opacity="0.85"/><ellipse cx="786.84" cy="97.42" rx="11.94" ry="3.18" fill="#3f9cf0" opacity="0.7"/><circle cx="791.62" cy="91.05" r="1.19" fill="#a0623a"/><circle cx="796.79" cy="94.24" r="1.19" fill="#a0623a"/><circle cx="791.62" cy="97.42" r="1.19" fill="#a0623a"/><rect x="786.84" y="94.04" width="11.94" height="0.48" fill="#b8845a" opacity="0.8"/></g></g><circle cx="795" cy="253.8" r="20" fill="#0c6cfb"/><clipPath id="ct4"><circle cx="795" cy="339.5" r="19.8"/></clipPath><g clip-path="url(#ct4)"><g filter="url(#bl06)"><rect x="763.32" y="307.82" width="63.36" height="63.36" fill="#1c5f97"/><ellipse cx="795" cy="321.68" rx="23.76" ry="7.92" fill="#17528a"/><rect x="763.32" y="330.79" width="63.36" height="5.54" fill="#2468a0" opacity="0.8"/><circle cx="781.93" cy="326.04" r="1.27" fill="#f0cf4a"/><circle cx="788.27" cy="324.45" r="1.27" fill="#f0cf4a"/><circle cx="793.02" cy="325.24" r="1.27" fill="#f0cf4a"/><circle cx="797.38" cy="326.04" r="1.27" fill="#f0cf4a"/><circle cx="804.11" cy="324.45" r="1.27" fill="#f0cf4a"/><circle cx="800.94" cy="328.81" r="1.27" fill="#f0cf4a"/><circle cx="804.5" cy="328.02" r="1.27" fill="#f0cf4a"/><circle cx="791.04" cy="330.39" r="0.71" fill="#e8d48a" opacity="0.8"/><circle cx="795.79" cy="331.58" r="0.71" fill="#e8d48a" opacity="0.8"/><circle cx="787.08" cy="331.58" r="0.71" fill="#e8d48a" opacity="0.8"/><circle cx="799.75" cy="332.37" r="0.71" fill="#e8d48a" opacity="0.8"/><circle cx="808.86" cy="331.58" r="0.71" fill="#e8d48a" opacity="0.8"/><circle cx="783.91" cy="332.77" r="0.71" fill="#e8d48a" opacity="0.8"/><circle cx="812.03" cy="330.79" r="0.71" fill="#e8d48a" opacity="0.8"/><rect x="763.32" y="335.54" width="63.36" height="2.97" fill="#13284e"/><rect x="763.32" y="338.31" width="63.36" height="23.76" fill="#234e82"/><rect x="777.58" y="338.31" width="1.39" height="8.71" fill="#d6b24a" opacity="0.8"/><rect x="781.93" y="338.31" width="1.39" height="11.88" fill="#d6b24a" opacity="0.8"/><rect x="787.08" y="338.31" width="1.39" height="11.88" fill="#d6b24a" opacity="0.8"/><rect x="792.23" y="338.31" width="1.39" height="9.9" fill="#d6b24a" opacity="0.8"/><rect x="796.98" y="338.31" width="1.39" height="8.71" fill="#d6b24a" opacity="0.8"/><rect x="801.34" y="338.31" width="1.39" height="7.92" fill="#d6b24a" opacity="0.8"/><rect x="810.84" y="338.31" width="1.39" height="7.92" fill="#d6b24a" opacity="0.8"/><rect x="783.12" y="339.5" width="3.17" height="9.9" fill="#1b3c70" opacity="0.7"/><rect x="794.21" y="339.5" width="2.38" height="7.92" fill="#1b3c70" opacity="0.7"/><rect x="803.71" y="339.5" width="5.54" height="7.92" fill="#20457c" opacity="0.7"/><ellipse cx="800.54" cy="352.96" rx="14.26" ry="4.36" fill="#c2a050"/><ellipse cx="783.12" cy="353.36" rx="11.09" ry="5.54" fill="#24445c"/><ellipse cx="793.02" cy="358.9" rx="15.84" ry="3.17" fill="#6f7a5a"/><ellipse cx="787.87" cy="350.59" rx="3.96" ry="1.58" fill="#caa64e" opacity="0.7"/></g></g><clipPath id="ct5"><circle cx="795" cy="425.8" r="19.8"/></clipPath><g clip-path="url(#ct5)"><g filter="url(#bl06)"><rect x="763.32" y="394.12" width="63.36" height="63.36" fill="#0b0c0d"/><path d="M794.21 406L814.8 406L814.8 430.55L798.96 430.55z" fill="#43484b"/><ellipse cx="804.9" cy="417.88" rx="9.5" ry="11.88" fill="#53585b" opacity="0.8"/><rect x="779.16" y="413.92" width="11.88" height="17.82" fill="#1d1e1f"/><rect x="792.23" y="420.26" width="1.98" height="9.5" fill="#f2f2f2"/><rect x="797.38" y="421.84" width="2.18" height="5.54" fill="#ffffff"/><ellipse cx="798.96" cy="425.8" rx="3.96" ry="4.75" fill="#cfd3d4" opacity="0.55"/><rect x="791.04" y="411.54" width="0.99" height="3.96" fill="#8a3030" opacity="0.8"/><path d="M793.42 417.88L798.17 413.92L798.96 415.5L795 419.46z" fill="#222"/><ellipse cx="795" cy="434.91" rx="2.38" ry="1.19" fill="#d8d8d8"/><rect x="809.26" y="423.82" width="1.58" height="7.92" fill="#1a1a1a"/><ellipse cx="795" cy="443.62" rx="23.76" ry="8.71" fill="#08090a"/></g></g><clipPath id="ct6"><circle cx="795" cy="511.9" r="19.8"/></clipPath><g clip-path="url(#ct6)"><g filter="url(#bl06)"><rect x="763.32" y="480.22" width="63.36" height="63.36" fill="#4566c8"/><ellipse cx="783.12" cy="500.02" rx="19.8" ry="17.82" fill="#5a62c0" opacity="0.6"/><ellipse cx="802.92" cy="523.78" rx="19.8" ry="13.86" fill="#3a72d8" opacity="0.8"/><ellipse cx="793.02" cy="500.42" rx="8.32" ry="2.57" fill="#d6e8fb" transform="rotate(22 793.02 500.42)"/><ellipse cx="799.75" cy="505.17" rx="3.96" ry="1.58" fill="#bcd6f6" opacity="0.9" transform="rotate(40 799.75 505.17)"/><ellipse cx="795.79" cy="514.67" rx="7.92" ry="4.75" fill="#1fa5e6"/><ellipse cx="795.79" cy="514.28" rx="4.75" ry="2.38" fill="#274a9c"/><ellipse cx="798.17" cy="508.73" rx="3.96" ry="4.36" fill="#f3f5f9"/><circle cx="798.17" cy="503.19" r="2.18" fill="#2a3a7a"/><ellipse cx="794.21" cy="513.88" rx="3.17" ry="2.18" fill="#1c2248"/><path d="M791.83 515.86L786.68 521.8" stroke="#e6c4b8" stroke-width="1.78" stroke-linecap="round" fill="none"/><ellipse cx="795" cy="527.74" rx="12.67" ry="2.77" fill="#7f9cf0" opacity="0.5"/><ellipse cx="785.1" cy="515.86" rx="3.96" ry="1.98" fill="#6f8fe8" opacity="0.5"/></g></g></svg>
<div class="t c" style="left:794.9px;top:256.40000000000003px;font-size:11px;color:#fff;font-weight:bold">*</div>
<div class="a" style="left:723.7px;top:113.2px;width:33.5px;height:12.2px;background:rgba(17,17,18,.88)"></div>
<div class="a" style="left:723.7px;top:113.2px;width:11.8px;height:12.2px;background:#f58220"></div>
<svg style="left:726.1px;top:115.5px" width="7" height="7.5" viewBox="0 0 7 7.5"><circle cx="3.5" cy="2" r="1.9" fill="#fff"/><path d="M0 7.5C0 4.8 1.5 4.2 3.5 4.2S7 4.8 7 7.5z" fill="#fff"/></svg>
<div class="t cy" style="left:737px;top:119.5px;font-size:6.9px;color:#fff;font-weight:bold">曾晓阳</div>
<div class="a" style="left:724.3px;top:199.2px;width:37px;height:12.2px;background:rgba(58,58,60,.82)"></div>
<svg style="left:726.8px;top:200.89999999999998px" width="6" height="9" viewBox="0 0 6 9"><rect x="1.5" y="0" width="3" height="5.6" rx="1.5" fill="#2fdc4b"/><path d="M.3 3.8a2.7 2.7 0 0 0 5.4 0M3 6.5v1.5M1.4 8.3h3.2" fill="none" stroke="#eee" stroke-width=".7"/></svg>
<div class="t cy" style="left:733.8px;top:205.5px;font-size:6.9px;color:#fff;font-weight:bold">教务马征</div>
<div class="a" style="left:723.7px;top:285.2px;width:18px;height:12.2px;background:rgba(17,17,18,.88)"></div>
<svg style="left:0;top:0" width="1080" height="586" viewBox="0 0 1080 586"><g><rect x="727.7" y="287.09999999999997" width="3" height="5.6" rx="1.5" fill="#fff"/><path d="M726.5 290.59999999999997a2.7 2.7 0 0 0 5.4 0M729.2 293.4v1.6M727.6 295.2h3.2" fill="none" stroke="#fff" stroke-width=".7"/><path d="M725.9000000000001 295.2L732.5 287.09999999999997" stroke="#f0484e" stroke-width=".75"/></g></svg>
<div class="t cy" style="left:733.5px;top:291.5px;font-size:6.9px;color:#fff;font-weight:bold">+</div>
<div class="a" style="left:723.7px;top:371.3px;width:32.5px;height:12.2px;background:rgba(17,17,18,.88)"></div>
<svg style="left:0;top:0" width="1080" height="586" viewBox="0 0 1080 586"><g><rect x="727.7" y="373.2" width="3" height="5.6" rx="1.5" fill="#fff"/><path d="M726.5 376.7a2.7 2.7 0 0 0 5.4 0M729.2 379.5v1.6M727.6 381.3h3.2" fill="none" stroke="#fff" stroke-width=".7"/><path d="M725.9000000000001 381.3L732.5 373.2" stroke="#f0484e" stroke-width=".75"/></g></svg>
<div class="t cy" style="left:733.5px;top:377.6px;font-size:6.9px;color:#fff;font-weight:bold">王梓宇</div>
<div class="a" style="left:723.7px;top:457.4px;width:32.5px;height:12.2px;background:rgba(17,17,18,.88)"></div>
<svg style="left:0;top:0" width="1080" height="586" viewBox="0 0 1080 586"><g><rect x="727.7" y="459.29999999999995" width="3" height="5.6" rx="1.5" fill="#fff"/><path d="M726.5 462.79999999999995a2.7 2.7 0 0 0 5.4 0M729.2 465.59999999999997v1.6M727.6 467.4h3.2" fill="none" stroke="#fff" stroke-width=".7"/><path d="M725.9000000000001 467.4L732.5 459.29999999999995" stroke="#f0484e" stroke-width=".75"/></g></svg>
<div class="t cy" style="left:733.5px;top:463.7px;font-size:6.9px;color:#fff;font-weight:bold">颜思琦</div>
<div class="a" style="left:723.7px;top:543.5px;width:32.5px;height:12.2px;background:rgba(17,17,18,.88)"></div>
<svg style="left:0;top:0" width="1080" height="586" viewBox="0 0 1080 586"><g><rect x="727.7" y="545.4000000000001" width="3" height="5.6" rx="1.5" fill="#fff"/><path d="M726.5 548.9000000000001a2.7 2.7 0 0 0 5.4 0M729.2 551.7v1.6M727.6 553.5h3.2" fill="none" stroke="#fff" stroke-width=".7"/><path d="M725.9000000000001 553.5L732.5 545.4000000000001" stroke="#f0484e" stroke-width=".75"/></g></svg>
<div class="t cy" style="left:733.5px;top:549.8px;font-size:6.9px;color:#fff;font-weight:bold">邵伯阳</div>
<div class="a" style="left:777px;top:39.4px;width:40px;height:10.6px;background:rgba(38,39,42,.85);border-radius:1.5px"></div>
<svg style="left:791.5px;top:42.3px" width="7" height="4" viewBox="0 0 7 4"><path d="M.4 3.6L3.5 .5L6.6 3.6" fill="none" stroke="#d8d8d8" stroke-width=".9"/></svg>
<div class="a" style="left:777px;top:539.5px;width:40px;height:10.6px;background:rgba(38,39,42,.85);border-radius:1.5px"></div>
<svg style="left:793.3px;top:543px" width="7" height="4" viewBox="0 0 7 4"><path d="M.4 .4L3.5 3.5L6.6 .4" fill="none" stroke="#eee" stroke-width=".9"/></svg>
<div class="a" id="members" style="left:872px;top:33.5px;width:208px;height:524px;background:#fff"></div>
<div class="a" style="left:878.8px;top:35.6px;width:194.5px;height:16.5px;border:.7px solid #ccd0dc;border-radius:3px;background:#fff"></div>
<svg style="left:883.5px;top:40.3px" width="6.5" height="6.8" viewBox="0 0 6.5 6.8"><circle cx="2.8" cy="2.8" r="2.3" fill="none" stroke="#666" stroke-width=".8"/><path d="M4.5 4.6L6.2 6.5" stroke="#666" stroke-width=".8"/></svg>
<div class="t cy" style="left:892px;top:43.8px;font-size:6.7px;color:#a9a9ad;">搜索成员</div>
<div class="a" style="left:928px;top:37px;width:137px;height:20px;background:#27292c"></div>
<div class="t cy" style="left:934.3px;top:47.3px;font-size:6.7px;color:#fff;">正在讲话: 教务马征:</div>
<svg style="left:1035px;top:41.5px" width="28" height="11" viewBox="0 0 28 11"><path d="M0 6l5-5.5 3.5 3.5L12 .3v9l-3.5-2.8L5 10z" fill="#505256"/><path d="M12.8 .5l3 2v8l-3-2z" fill="#6a6c70"/><path d="M22.5 1.5v2.3c3 .2 5 2 5.3 5.5-1.3-1.8-3-2.6-5.3-2.6v2.3L18.3 5.2z" fill="#c9c9cb"/></svg>
<div class="t cy" style="left:904.8px;top:69px;font-size:6.8px;color:#222;">曾晓阳</div>
<div class="t cy" style="left:904.8px;top:79.2px;font-size:6.5px;color:#8a8a8e;">(主持人, 我)</div>
<div class="t cy" style="left:904.8px;top:99.32000000000001px;font-size:6.8px;color:#222;">郭昊</div>
<div class="t cy" style="left:904.8px;top:124.04px;font-size:6.8px;color:#222;">教务马征</div>
<div class="t cy" style="left:904.8px;top:148.76px;font-size:6.8px;color:#222;">+</div>
<div class="t cy" style="left:904.8px;top:173.48px;font-size:6.8px;color:#222;">22级工班郑韵</div>
<div class="t cy" style="left:904.8px;top:198.2px;font-size:6.8px;color:#222;">st</div>
<div class="t cy" style="left:904.8px;top:222.92px;font-size:6.8px;color:#222;">白恬阳</div>
<div class="t cy" style="left:904.8px;top:247.64px;font-size:6.8px;color:#222;">蔡润娟</div>
<div class="t cy" style="left:904.8px;top:272.35999999999996px;font-size:6.8px;color:#222;">车建</div>
<div class="t cy" style="left:904.8px;top:297.08px;font-size:6.8px;color:#222;">陈培鑫</div>
<div class="t cy" style="left:904.8px;top:321.8px;font-size:6.8px;color:#222;">陈星宇</div>
<div class="t cy" style="left:904.8px;top:346.5199999999999px;font-size:6.8px;color:#222;">杜奕琳</div>
<div class="t cy" style="left:904.8px;top:371.23999999999995px;font-size:6.8px;color:#222;">韩新静</div>
<div class="t cy" style="left:904.8px;top:395.96px;font-size:6.8px;color:#222;">韩子轶</div>
<div class="t cy" style="left:904.8px;top:420.68px;font-size:6.8px;color:#222;">贾心阳</div>
<div class="t cy" style="left:904.8px;top:445.3999999999999px;font-size:6.8px;color:#222;">姜旭阳</div>
<div class="t cy" style="left:904.8px;top:470.11999999999995px;font-size:6.8px;color:#222;">赖少正</div>
<div class="t cy" style="left:904.8px;top:494.84px;font-size:6.8px;color:#222;">李鑫溪</div>
<div class="t cy" style="left:904.8px;top:519.5600000000001px;font-size:6.8px;color:#222;">李兴业</div>
<div class="t cy" style="left:904.8px;top:544.28px;font-size:6.8px;color:#222;">廖宫彬</div>
<svg style="left:0;top:0" width="1080" height="586" viewBox="0 0 1080 586"><clipPath id="cm0"><circle cx="890.6" cy="74.4" r="8.5"/></clipPath><g clip-path="url(#cm0)"><g filter="url(#bl045)"><rect x="877" y="60.8" width="27.2" height="27.2" fill="#1f63d8"/><ellipse cx="885.5" cy="70.15" rx="6.8" ry="4.25" fill="#1a55cc"/><ellipse cx="894" cy="68.28" rx="5.78" ry="2.89" fill="#d4f0f8"/><ellipse cx="890.94" cy="69.98" rx="3.74" ry="1.7" fill="#7fd2f0"/><ellipse cx="896.55" cy="70.15" rx="3.4" ry="2.04" fill="#f0f8fc" opacity="0.9"/><ellipse cx="895.7" cy="73.38" rx="4.59" ry="2.04" fill="#2d74dc"/><ellipse cx="887.2" cy="74.06" rx="5.95" ry="1.19" fill="#3a94ec" opacity="0.9" transform="rotate(-28 887.2 74.06)"/><ellipse cx="891.45" cy="75.25" rx="5.1" ry="1.36" fill="#3f9aee" opacity="0.8"/><rect x="877" y="77.12" width="27.2" height="11.9" fill="#207ce2"/><rect x="877" y="77.29" width="27.2" height="1.19" fill="#5cc0f0" opacity="0.85"/><ellipse cx="887.2" cy="81.2" rx="5.1" ry="1.36" fill="#3f9cf0" opacity="0.7"/><circle cx="889.24" cy="78.48" r="0.51" fill="#a0623a"/><circle cx="891.45" cy="79.84" r="0.51" fill="#a0623a"/><circle cx="889.24" cy="81.2" r="0.51" fill="#a0623a"/><rect x="887.2" y="79.76" width="5.1" height="0.2" fill="#b8845a" opacity="0.8"/></g></g><circle cx="890.6" cy="99.12" r="8.5" fill="#0c6cfb"/><path d="M1040 99.62c-.8-1.3-1.2-2-.5-2.4.6-.3 1.1.4 1.5 1v-3.6c0-.8 1-.8 1 0v-.7c0-.8 1.1-.8 1.1 0v.4c0-.8 1.1-.8 1.1 0v.7c0-.7 1-.7 1 0v4.8c0 2-1 3.3-2.8 3.3-1.3 0-2-.9-2.9-2.4z" fill="#0e72ed" stroke="#0e72ed" stroke-width=".5"/><g><rect x="1054.7" y="94.82000000000001" width="3" height="5.6" rx="1.5" fill="#b9b9bd"/><path d="M1053.5 98.32000000000001a2.7 2.7 0 0 0 5.4 0M1056.2 101.12v1.6M1054.6000000000001 102.92h3.2" fill="none" stroke="#b9b9bd" stroke-width=".7"/><path d="M1052.9 102.92L1059.5 94.82000000000001" stroke="#f07474" stroke-width=".75"/></g><g><rect x="1065.5" y="96.72" width="5.8" height="4.8" rx=".8" fill="#b9b9bd"/><path d="M1071.7 98.52000000000001l2.4-1.6v4.4l-2.4-1.6z" fill="#b9b9bd"/><path d="M1065.8 102.12L1073 95.92" stroke="#f07474" stroke-width=".75"/></g><clipPath id="cm2"><circle cx="890.6" cy="123.84" r="8.5"/></clipPath><g clip-path="url(#cm2)"><g filter="url(#bl045)"><rect x="877" y="110.24" width="27.2" height="27.2" fill="#d9d5c9"/><ellipse cx="890.6" cy="122.48" rx="5.27" ry="5.1" fill="#e7a23e"/><circle cx="886.52" cy="118.23" r="1.45" fill="#d98a2a"/><circle cx="894.68" cy="118.23" r="1.45" fill="#d98a2a"/><rect x="889.92" y="117.04" width="1.36" height="2.04" fill="#6a4520"/><rect x="885.5" y="118.74" width="0.68" height="5.95" fill="#5a4030" opacity="0.8"/><rect x="895.02" y="118.74" width="0.68" height="5.95" fill="#5a4030" opacity="0.8"/><circle cx="888.56" cy="122.14" r="0.6" fill="#4a2a10"/><circle cx="892.64" cy="122.14" r="0.6" fill="#4a2a10"/><ellipse cx="890.6" cy="124.18" rx="1.7" ry="1.02" fill="#f2d9a8"/><rect x="877" y="126.22" width="27.2" height="11.9" fill="#a94a36"/><ellipse cx="886.69" cy="128.94" rx="0.6" ry="0.85" fill="#f6e8da"/><ellipse cx="889.24" cy="128.94" rx="0.6" ry="0.85" fill="#f6e8da"/><ellipse cx="891.96" cy="128.94" rx="0.6" ry="0.85" fill="#f6e8da"/><ellipse cx="894.51" cy="128.94" rx="0.6" ry="0.85" fill="#f6e8da"/></g></g><circle cx="890.6" cy="123.84" r="8.3" fill="none" stroke="#d9d9dc" stroke-width=".4"/><g><rect x="1039.6" y="120.24000000000001" width="6.8" height="5" rx=".6" fill="#d4d4d7"/><path d="M1041 126.64h4" stroke="#d4d4d7" stroke-width=".8"/><path d="M1042 123.34l1.2-1.3 1.2 1.3" stroke="#fff" stroke-width=".5" fill="none"/></g><g><rect x="1054.7" y="118.04" width="3" height="6" rx="1.5" fill="#35e03a"/><path d="M1053.5 121.84a2.7 2.7 0 0 0 5.4 0M1056.2 124.64v1.6M1054.6 126.54h3.2" fill="none" stroke="#d0d0d3" stroke-width=".7"/></g><g><rect x="1065.5" y="121.44" width="5.8" height="4.8" rx=".8" fill="#c2c2c5"/><path d="M1071.7 123.24000000000001l2.4-1.6v4.4l-2.4-1.6z" fill="#c2c2c5"/></g><circle cx="890.6" cy="148.56" r="8.5" fill="#0c6cfb"/><g><rect x="1054.7" y="144.26" width="3" height="5.6" rx="1.5" fill="#b9b9bd"/><path d="M1053.5 147.76a2.7 2.7 0 0 0 5.4 0M1056.2 150.56v1.6M1054.6000000000001 152.36h3.2" fill="none" stroke="#b9b9bd" stroke-width=".7"/><path d="M1052.9 152.36L1059.5 144.26" stroke="#f07474" stroke-width=".75"/></g><g><rect x="1065.5" y="146.16" width="5.8" height="4.8" rx=".8" fill="#b9b9bd"/><path d="M1071.7 147.96l2.4-1.6v4.4l-2.4-1.6z" fill="#b9b9bd"/><path d="M1065.8 151.56L1073 145.36" stroke="#f07474" stroke-width=".75"/></g><circle cx="890.6" cy="173.28" r="8.5" fill="#0c6cfb"/><g><rect x="1054.7" y="168.98" width="3" height="5.6" rx="1.5" fill="#b9b9bd"/><path d="M1053.5 172.48a2.7 2.7 0 0 0 5.4 0M1056.2 175.28v1.6M1054.6000000000001 177.08h3.2" fill="none" stroke="#b9b9bd" stroke-width=".7"/><path d="M1052.9 177.08L1059.5 168.98" stroke="#f07474" stroke-width=".75"/></g><g><rect x="1065.5" y="170.88" width="5.8" height="4.8" rx=".8" fill="#b9b9bd"/><path d="M1071.7 172.68l2.4-1.6v4.4l-2.4-1.6z" fill="#b9b9bd"/><path d="M1065.8 176.28L1073 170.08" stroke="#f07474" stroke-width=".75"/></g><clipPath id="cm5"><circle cx="890.6" cy="198" r="8.5"/></clipPath><g clip-path="url(#cm5)"><g filter="url(#bl045)"><rect x="877" y="184.4" width="27.2" height="27.2" fill="#7d6e6b"/><ellipse cx="890.6" cy="198" rx="8.5" ry="8.5" fill="#75645f"/><circle cx="890.6" cy="196.3" r="2.89" fill="#080605"/><rect x="889.58" y="198" width="2.04" height="3.4" fill="#0c0806"/><ellipse cx="890.6" cy="206.16" rx="5.1" ry="4.59" fill="#1c130c"/></g></g><g><rect x="1054.7" y="193.7" width="3" height="5.6" rx="1.5" fill="#b9b9bd"/><path d="M1053.5 197.2a2.7 2.7 0 0 0 5.4 0M1056.2 200v1.6M1054.6000000000001 201.8h3.2" fill="none" stroke="#b9b9bd" stroke-width=".7"/><path d="M1052.9 201.8L1059.5 193.7" stroke="#f07474" stroke-width=".75"/></g><g><rect x="1065.5" y="195.6" width="5.8" height="4.8" rx=".8" fill="#b9b9bd"/><path d="M1071.7 197.4l2.4-1.6v4.4l-2.4-1.6z" fill="#b9b9bd"/><path d="M1065.8 201L1073 194.8" stroke="#f07474" stroke-width=".75"/></g><clipPath id="cm6"><circle cx="890.6" cy="222.72" r="8.5"/></clipPath><g clip-path="url(#cm6)"><g filter="url(#bl045)"><rect x="877" y="209.12" width="27.2" height="27.2" fill="#f3dccb"/><rect x="891.45" y="214.22" width="8.5" height="17" fill="#b9aad8"/><ellipse cx="895.7" cy="218.47" rx="2.55" ry="3.4" fill="#8d8fd0"/><ellipse cx="889.24" cy="219.32" rx="3.74" ry="3.4" fill="#5a3f5e"/><ellipse cx="889.75" cy="222.04" rx="2.04" ry="2.04" fill="#f6e4dc"/><rect x="888.9" y="223.74" width="4.59" height="8.5" fill="#f5f1f5"/><rect x="885.16" y="225.44" width="3.74" height="6.8" fill="#7d7dac"/><rect x="893.32" y="225.44" width="2.72" height="6.8" fill="#8f82b8"/></g></g><circle cx="890.6" cy="222.72" r="8.3" fill="none" stroke="#d9d9dc" stroke-width=".4"/><g><rect x="1054.7" y="218.42" width="3" height="5.6" rx="1.5" fill="#b9b9bd"/><path d="M1053.5 221.92a2.7 2.7 0 0 0 5.4 0M1056.2 224.72v1.6M1054.6000000000001 226.52h3.2" fill="none" stroke="#b9b9bd" stroke-width=".7"/><path d="M1052.9 226.52L1059.5 218.42" stroke="#f07474" stroke-width=".75"/></g><g><rect x="1065.5" y="220.32" width="5.8" height="4.8" rx=".8" fill="#b9b9bd"/><path d="M1071.7 222.12l2.4-1.6v4.4l-2.4-1.6z" fill="#b9b9bd"/><path d="M1065.8 225.72L1073 219.52" stroke="#f07474" stroke-width=".75"/></g><clipPath id="cm7"><circle cx="890.6" cy="247.44" r="8.5"/></clipPath><g clip-path="url(#cm7)"><g filter="url(#bl045)"><rect x="877" y="233.84" width="27.2" height="27.2" fill="#f4eff3"/><ellipse cx="886.86" cy="243.19" rx="7.14" ry="5.1" fill="#3a1f1a" transform="rotate(-25 886.86 243.19)"/><ellipse cx="892.64" cy="247.78" rx="5.1" ry="5.44" fill="#f5edf0"/><ellipse cx="887.2" cy="253.9" rx="5.1" ry="2.38" fill="#d9b6d4"/><ellipse cx="894.85" cy="244.04" rx="2.04" ry="2.04" fill="#fff"/></g></g><circle cx="890.6" cy="247.44" r="8.3" fill="none" stroke="#d9d9dc" stroke-width=".4"/><g><rect x="1054.7" y="243.14" width="3" height="5.6" rx="1.5" fill="#b9b9bd"/><path d="M1053.5 246.64a2.7 2.7 0 0 0 5.4 0M1056.2 249.44v1.6M1054.6000000000001 251.24h3.2" fill="none" stroke="#b9b9bd" stroke-width=".7"/><path d="M1052.9 251.24L1059.5 243.14" stroke="#f07474" stroke-width=".75"/></g><g><rect x="1065.5" y="245.04" width="5.8" height="4.8" rx=".8" fill="#b9b9bd"/><path d="M1071.7 246.84l2.4-1.6v4.4l-2.4-1.6z" fill="#b9b9bd"/><path d="M1065.8 250.44L1073 244.24" stroke="#f07474" stroke-width=".75"/></g><clipPath id="cm8"><circle cx="890.6" cy="272.15999999999997" r="8.5"/></clipPath><g clip-path="url(#cm8)"><g filter="url(#bl045)"><rect x="877" y="258.56" width="27.2" height="27.2" fill="#a5c8e8"/><rect x="882.78" y="266.72" width="2.72" height="14.45" fill="#4c4238"/><rect x="885.84" y="265.02" width="1.7" height="16.15" fill="#eaf0f5"/><rect x="887.88" y="268.76" width="3.74" height="11.9" fill="#3f5f9a"/><rect x="891.96" y="267.4" width="1.19" height="9.35" fill="#a9ba88"/><rect x="893.66" y="267.06" width="4.08" height="13.6" fill="#5f80ba"/><rect x="894.68" y="268.76" width="0.85" height="10.2" fill="#e0e8f0" opacity="0.8"/><rect x="877" y="277.6" width="27.2" height="8.5" fill="#3c5c8c"/></g></g><g><rect x="1054.7" y="267.85999999999996" width="3" height="5.6" rx="1.5" fill="#b9b9bd"/><path d="M1053.5 271.35999999999996a2.7 2.7 0 0 0 5.4 0M1056.2 274.15999999999997v1.6M1054.6000000000001 275.96h3.2" fill="none" stroke="#b9b9bd" stroke-width=".7"/><path d="M1052.9 275.96L1059.5 267.85999999999996" stroke="#f07474" stroke-width=".75"/></g><g><rect x="1065.5" y="269.76" width="5.8" height="4.8" rx=".8" fill="#b9b9bd"/><path d="M1071.7 271.55999999999995l2.4-1.6v4.4l-2.4-1.6z" fill="#b9b9bd"/><path d="M1065.8 275.15999999999997L1073 268.96" stroke="#f07474" stroke-width=".75"/></g><clipPath id="cm9"><circle cx="890.6" cy="296.88" r="8.5"/></clipPath><g clip-path="url(#cm9)"><g filter="url(#bl045)"><rect x="877" y="283.28" width="27.2" height="27.2" fill="#040404"/><path d="M883.8 298.58L891.45 292.8L897.06 295.86L889.24 303.34z" fill="#e9e9e9"/><path d="M886.35 300.28L893.66 294.5" stroke="#8c8c8c" stroke-width="0.51" stroke-linecap="round" fill="none"/><path d="M888.22 301.98L895.36 295.52" stroke="#8c8c8c" stroke-width="0.51" stroke-linecap="round" fill="none"/><path d="M883.8 298.58L889.24 303.34L889.24 304.53L883.8 299.94z" fill="#bdbdbd"/></g></g><g><rect x="1054.7" y="292.58" width="3" height="5.6" rx="1.5" fill="#b9b9bd"/><path d="M1053.5 296.08a2.7 2.7 0 0 0 5.4 0M1056.2 298.88v1.6M1054.6000000000001 300.68h3.2" fill="none" stroke="#b9b9bd" stroke-width=".7"/><path d="M1052.9 300.68L1059.5 292.58" stroke="#f07474" stroke-width=".75"/></g><g><rect x="1065.5" y="294.48" width="5.8" height="4.8" rx=".8" fill="#b9b9bd"/><path d="M1071.7 296.28l2.4-1.6v4.4l-2.4-1.6z" fill="#b9b9bd"/><path d="M1065.8 299.88L1073 293.68" stroke="#f07474" stroke-width=".75"/></g><circle cx="890.6" cy="321.6" r="8.5" fill="#0c6cfb"/><g><rect x="1054.7" y="317.3" width="3" height="5.6" rx="1.5" fill="#b9b9bd"/><path d="M1053.5 320.8a2.7 2.7 0 0 0 5.4 0M1056.2 323.6v1.6M1054.6000000000001 325.40000000000003h3.2" fill="none" stroke="#b9b9bd" stroke-width=".7"/><path d="M1052.9 325.40000000000003L1059.5 317.3" stroke="#f07474" stroke-width=".75"/></g><g><rect x="1065.5" y="319.20000000000005" width="5.8" height="4.8" rx=".8" fill="#b9b9bd"/><path d="M1071.7 321l2.4-1.6v4.4l-2.4-1.6z" fill="#b9b9bd"/><path d="M1065.8 324.6L1073 318.40000000000003" stroke="#f07474" stroke-width=".75"/></g><clipPath id="cm11"><circle cx="890.6" cy="346.31999999999994" r="8.5"/></clipPath><g clip-path="url(#cm11)"><g filter="url(#bl045)"><rect x="877" y="332.72" width="27.2" height="27.2" fill="#1c3a9c"/><ellipse cx="892.3" cy="346.32" rx="4.76" ry="5.1" fill="#f2b21a"/><ellipse cx="887.2" cy="342.92" rx="3.74" ry="3.4" fill="#f8f0d2"/><ellipse cx="891.45" cy="341.22" rx="2.04" ry="1.02" fill="#5a80b8"/><ellipse cx="888.56" cy="350.57" rx="2.72" ry="2.38" fill="#efe4c6"/><ellipse cx="892.64" cy="348.36" rx="2.38" ry="2.04" fill="#f6c84a"/><rect x="877" y="353.12" width="27.2" height="6.8" fill="#101c4e"/></g></g><g><rect x="1054.7" y="342.0199999999999" width="3" height="5.6" rx="1.5" fill="#b9b9bd"/><path d="M1053.5 345.5199999999999a2.7 2.7 0 0 0 5.4 0M1056.2 348.31999999999994v1.6M1054.6000000000001 350.11999999999995h3.2" fill="none" stroke="#b9b9bd" stroke-width=".7"/><path d="M1052.9 350.11999999999995L1059.5 342.0199999999999" stroke="#f07474" stroke-width=".75"/></g><g><rect x="1065.5" y="343.91999999999996" width="5.8" height="4.8" rx=".8" fill="#b9b9bd"/><path d="M1071.7 345.7199999999999l2.4-1.6v4.4l-2.4-1.6z" fill="#b9b9bd"/><path d="M1065.8 349.31999999999994L1073 343.11999999999995" stroke="#f07474" stroke-width=".75"/></g><clipPath id="cm12"><circle cx="890.6" cy="371.03999999999996" r="8.5"/></clipPath><g clip-path="url(#cm12)"><g filter="url(#bl045)"><rect x="877" y="357.44" width="27.2" height="27.2" fill="#ece4e2"/><path d="M885.16 374.44L890.6 371.04L896.55 374.1L890.6 376.48z" fill="#3a5aa8"/><rect x="889.24" y="367.64" width="3.74" height="4.42" fill="#5a78c0"/><path d="M893.32 365.94L894 369.34" stroke="#d89aa0" stroke-width="0.68" stroke-linecap="round" fill="none"/><path d="M890.26 365.94L889.92 368.66" stroke="#d89aa0" stroke-width="0.51" stroke-linecap="round" fill="none"/><ellipse cx="890.6" cy="377.16" rx="5.1" ry="0.85" fill="#cbb8b4"/></g></g><circle cx="890.6" cy="371.04" r="8.3" fill="none" stroke="#d9d9dc" stroke-width=".4"/><g><rect x="1054.7" y="366.73999999999995" width="3" height="5.6" rx="1.5" fill="#b9b9bd"/><path d="M1053.5 370.23999999999995a2.7 2.7 0 0 0 5.4 0M1056.2 373.03999999999996v1.6M1054.6000000000001 374.84h3.2" fill="none" stroke="#b9b9bd" stroke-width=".7"/><path d="M1052.9 374.84L1059.5 366.73999999999995" stroke="#f07474" stroke-width=".75"/></g><g><rect x="1065.5" y="368.64" width="5.8" height="4.8" rx=".8" fill="#b9b9bd"/><path d="M1071.7 370.43999999999994l2.4-1.6v4.4l-2.4-1.6z" fill="#b9b9bd"/><path d="M1065.8 374.03999999999996L1073 367.84" stroke="#f07474" stroke-width=".75"/></g><circle cx="890.6" cy="395.76" r="8.5" fill="#0c6cfb"/><g><rect x="1054.7" y="391.46" width="3" height="5.6" rx="1.5" fill="#b9b9bd"/><path d="M1053.5 394.96a2.7 2.7 0 0 0 5.4 0M1056.2 397.76v1.6M1054.6000000000001 399.56h3.2" fill="none" stroke="#b9b9bd" stroke-width=".7"/><path d="M1052.9 399.56L1059.5 391.46" stroke="#f07474" stroke-width=".75"/></g><g><rect x="1065.5" y="393.36" width="5.8" height="4.8" rx=".8" fill="#b9b9bd"/><path d="M1071.7 395.15999999999997l2.4-1.6v4.4l-2.4-1.6z" fill="#b9b9bd"/><path d="M1065.8 398.76L1073 392.56" stroke="#f07474" stroke-width=".75"/></g><circle cx="890.6" cy="420.48" r="8.5" fill="#0c6cfb"/><g><rect x="1054.7" y="416.18" width="3" height="5.6" rx="1.5" fill="#b9b9bd"/><path d="M1053.5 419.68a2.7 2.7 0 0 0 5.4 0M1056.2 422.48v1.6M1054.6000000000001 424.28000000000003h3.2" fill="none" stroke="#b9b9bd" stroke-width=".7"/><path d="M1052.9 424.28000000000003L1059.5 416.18" stroke="#f07474" stroke-width=".75"/></g><g><rect x="1065.5" y="418.08000000000004" width="5.8" height="4.8" rx=".8" fill="#b9b9bd"/><path d="M1071.7 419.88l2.4-1.6v4.4l-2.4-1.6z" fill="#b9b9bd"/><path d="M1065.8 423.48L1073 417.28000000000003" stroke="#f07474" stroke-width=".75"/></g><clipPath id="cm15"><circle cx="890.6" cy="445.19999999999993" r="8.5"/></clipPath><g clip-path="url(#cm15)"><g filter="url(#bl045)"><rect x="877" y="431.6" width="27.2" height="27.2" fill="#d9c6ba"/><ellipse cx="888.05" cy="446.9" rx="5.1" ry="7.14" fill="#ead6cc"/><rect x="894" y="439.25" width="5.44" height="9.35" fill="#a8503c"/><rect x="891.96" y="442.65" width="2.38" height="6.8" fill="#f0e8e4"/><ellipse cx="893.66" cy="446.9" rx="1.02" ry="1.7" fill="#1a1a1a"/><rect x="882.1" y="441.8" width="8.5" height="2.89" fill="#0e0e10"/><path d="M890.6 442.31L893.66 442.82L893.66 443.5L890.6 443.5z" fill="#141414"/><rect x="891.45" y="450.3" width="7.65" height="3.4" fill="#1c1a1a"/></g></g><g><rect x="1054.7" y="440.8999999999999" width="3" height="5.6" rx="1.5" fill="#b9b9bd"/><path d="M1053.5 444.3999999999999a2.7 2.7 0 0 0 5.4 0M1056.2 447.19999999999993v1.6M1054.6000000000001 448.99999999999994h3.2" fill="none" stroke="#b9b9bd" stroke-width=".7"/><path d="M1052.9 448.99999999999994L1059.5 440.8999999999999" stroke="#f07474" stroke-width=".75"/></g><g><rect x="1065.5" y="442.79999999999995" width="5.8" height="4.8" rx=".8" fill="#b9b9bd"/><path d="M1071.7 444.5999999999999l2.4-1.6v4.4l-2.4-1.6z" fill="#b9b9bd"/><path d="M1065.8 448.19999999999993L1073 441.99999999999994" stroke="#f07474" stroke-width=".75"/></g><clipPath id="cm16"><circle cx="890.6" cy="469.91999999999996" r="8.5"/></clipPath><g clip-path="url(#cm16)"><g filter="url(#bl045)"><rect x="877" y="456.32" width="27.2" height="27.2" fill="#161b16"/><ellipse cx="890.6" cy="471.28" rx="7.14" ry="5.44" fill="#5c6359"/><path d="M884.48 468.56L885.5 463.46L888.9 467.2z" fill="#4a5048"/><path d="M896.72 468.56L895.7 463.46L892.3 467.2z" fill="#4a5048"/><ellipse cx="890.6" cy="473.32" rx="3.06" ry="1.7" fill="#8b9086"/><circle cx="887.71" cy="470.26" r="0.77" fill="#8c6c3c"/><circle cx="893.49" cy="470.26" r="0.77" fill="#8c6c3c"/><rect x="877" y="476.04" width="27.2" height="7.48" fill="#2a3a34"/></g></g><g><rect x="1054.7" y="465.61999999999995" width="3" height="5.6" rx="1.5" fill="#b9b9bd"/><path d="M1053.5 469.11999999999995a2.7 2.7 0 0 0 5.4 0M1056.2 471.91999999999996v1.6M1054.6000000000001 473.71999999999997h3.2" fill="none" stroke="#b9b9bd" stroke-width=".7"/><path d="M1052.9 473.71999999999997L1059.5 465.61999999999995" stroke="#f07474" stroke-width=".75"/></g><g><rect x="1065.5" y="467.52" width="5.8" height="4.8" rx=".8" fill="#b9b9bd"/><path d="M1071.7 469.31999999999994l2.4-1.6v4.4l-2.4-1.6z" fill="#b9b9bd"/><path d="M1065.8 472.91999999999996L1073 466.71999999999997" stroke="#f07474" stroke-width=".75"/></g><clipPath id="cm17"><circle cx="890.6" cy="494.64" r="8.5"/></clipPath><g clip-path="url(#cm17)"><g filter="url(#bl045)"><rect x="877" y="481.04" width="27.2" height="27.2" fill="#b05a1c"/><ellipse cx="890.6" cy="494.64" rx="8.5" ry="8.5" fill="#c46a22"/><ellipse cx="894.85" cy="491.24" rx="4.25" ry="4.25" fill="#d9822c" opacity="0.8"/><ellipse cx="887.2" cy="492.26" rx="2.38" ry="3.4" fill="#f1d9aa"/><circle cx="887.88" cy="491.24" r="1.02" fill="#e2b888"/><path d="M889.75 493.79L894.34 494.64L892.64 502.63L887.88 501.78z" fill="#7dbccc"/><path d="M885.16 496.34L896.04 497.36" stroke="#f5ede2" stroke-width="1.19" stroke-linecap="round" fill="none"/><rect x="877" y="501.44" width="27.2" height="6.8" fill="#6a3010"/></g></g><g><rect x="1054.7" y="490.34" width="3" height="5.6" rx="1.5" fill="#b9b9bd"/><path d="M1053.5 493.84a2.7 2.7 0 0 0 5.4 0M1056.2 496.64v1.6M1054.6000000000001 498.44h3.2" fill="none" stroke="#b9b9bd" stroke-width=".7"/><path d="M1052.9 498.44L1059.5 490.34" stroke="#f07474" stroke-width=".75"/></g><g><rect x="1065.5" y="492.24" width="5.8" height="4.8" rx=".8" fill="#b9b9bd"/><path d="M1071.7 494.03999999999996l2.4-1.6v4.4l-2.4-1.6z" fill="#b9b9bd"/><path d="M1065.8 497.64L1073 491.44" stroke="#f07474" stroke-width=".75"/></g><circle cx="890.6" cy="519.36" r="8.5" fill="#0c6cfb"/><g><rect x="1054.7" y="515.0600000000001" width="3" height="5.6" rx="1.5" fill="#b9b9bd"/><path d="M1053.5 518.5600000000001a2.7 2.7 0 0 0 5.4 0M1056.2 521.36v1.6M1054.6000000000001 523.16h3.2" fill="none" stroke="#b9b9bd" stroke-width=".7"/><path d="M1052.9 523.16L1059.5 515.0600000000001" stroke="#f07474" stroke-width=".75"/></g><g><rect x="1065.5" y="516.96" width="5.8" height="4.8" rx=".8" fill="#b9b9bd"/><path d="M1071.7 518.76l2.4-1.6v4.4l-2.4-1.6z" fill="#b9b9bd"/><path d="M1065.8 522.36L1073 516.16" stroke="#f07474" stroke-width=".75"/></g><clipPath id="cm19"><circle cx="890.6" cy="544.0799999999999" r="8.5"/></clipPath><g clip-path="url(#cm19)"><g filter="url(#bl045)"><rect x="877" y="530.48" width="27.2" height="27.2" fill="#1e4c6c"/><ellipse cx="890.6" cy="544.08" rx="8.5" ry="8.5" fill="#245a7c" opacity="0.7"/><ellipse cx="890.6" cy="540.68" rx="5.1" ry="3.91" fill="#e8783a"/><ellipse cx="890.6" cy="543.4" rx="3.4" ry="2.89" fill="#f6e0d0"/><circle cx="888.9" cy="542.72" r="0.6" fill="#3a4ae0"/><circle cx="892.3" cy="542.72" r="0.6" fill="#3a4ae0"/><ellipse cx="890.6" cy="545.1" rx="2.04" ry="0.68" fill="#fff"/><path d="M887.2 546.29L894 546.29L892.81 552.58L888.39 552.58z" fill="#c02a2a"/><rect x="884.14" y="546.12" width="3.06" height="5.1" fill="#4a5a9c" opacity="0.8"/><rect x="894" y="546.12" width="3.06" height="5.1" fill="#4a5a9c" opacity="0.8"/></g></g><g><rect x="1054.7" y="539.78" width="3" height="5.6" rx="1.5" fill="#b9b9bd"/><path d="M1053.5 543.28a2.7 2.7 0 0 0 5.4 0M1056.2 546.0799999999999v1.6M1054.6000000000001 547.8799999999999h3.2" fill="none" stroke="#b9b9bd" stroke-width=".7"/><path d="M1052.9 547.8799999999999L1059.5 539.78" stroke="#f07474" stroke-width=".75"/></g><g><rect x="1065.5" y="541.68" width="5.8" height="4.8" rx=".8" fill="#b9b9bd"/><path d="M1071.7 543.4799999999999l2.4-1.6v4.4l-2.4-1.6z" fill="#b9b9bd"/><path d="M1065.8 547.0799999999999L1073 540.8799999999999" stroke="#f07474" stroke-width=".75"/></g></svg>
<div class="t c" style="left:890.6px;top:99.22px;font-size:6.3px;color:#fff;letter-spacing:-.1px">郭昊</div>
<div class="t c" style="left:890.6px;top:148.66px;font-size:6.5px;color:#fff;letter-spacing:-.1px">*</div>
<div class="t c" style="left:890.6px;top:173.38px;font-size:6.3px;color:#fff;letter-spacing:-.1px">郑韵</div>
<div class="t c" style="left:890.6px;top:321.7px;font-size:6.3px;color:#fff;letter-spacing:-.1px">星宇</div>
<div class="t c" style="left:890.6px;top:395.86px;font-size:6.3px;color:#fff;letter-spacing:-.1px">子轶</div>
<div class="t c" style="left:890.6px;top:420.58px;font-size:6.3px;color:#fff;letter-spacing:-.1px">心阳</div>
<div class="t c" style="left:890.6px;top:519.46px;font-size:6.3px;color:#fff;letter-spacing:-.1px">兴业</div>
<div class="a" id="bottombar" style="left:0;top:557.5px;width:1080px;height:28.5px;background:#fff"></div>
<div class="a" style="left:872px;top:557.5px;width:208px;height:26.5px;border-top:.7px solid #ececef;border-left:.7px solid #f0f0f2"></div>
<div class="a" style="left:0;top:583.8px;width:1080px;height:2.2px;background:linear-gradient(#e9eef1,#cfdde6)"></div>
<div class="a" style="left:0;top:584.3px;width:28px;height:1.7px;background:#cfe0ea"></div>
<div class="a" style="left:358.5px;top:584.3px;width:27px;height:1.7px;background:#f0a052"></div>
<div class="a" style="left:377px;top:559.3px;width:46.7px;height:24px;background:#e6e6ea;border-radius:2.5px"></div>
<svg style="left:0;top:0" width="1080" height="586" viewBox="0 0 1080 586"><g><rect x="16.4" y="560.8" width="3.8" height="7" rx="1.9" fill="#3a3a3d"/><path d="M14.8 565.3a3.5 3.5 0 0 0 7 0M18.3 569v2M16 571.3h4.6" fill="none" stroke="#3a3a3d" stroke-width=".9"/><path d="M13.8 571.5L22.8 560.5" stroke="#f0383e" stroke-width="1.1"/></g><path d="M35.5 571.8l2.3-2.3 2.3 2.3" fill="none" stroke="#555" stroke-width=".8"/><g><rect x="53" y="562.6" width="9" height="7.8" rx="1" fill="#3a3a3d"/><path d="M62.5 565.5l3.7-2.5v7l-3.7-2.5z" fill="#3a3a3d"/><path d="M53.5 572L63.5 561" stroke="#f0383e" stroke-width="1.1"/></g><path d="M76.5 571.8l2.3-2.3 2.3 2.3" fill="none" stroke="#555" stroke-width=".8"/><g><rect x="279.5" y="561" width="12.5" height="9" rx="1" fill="#2a2c2f" stroke="#1ec85a" stroke-width="1.1"/><path d="M283.5 572.3h4.5" stroke="#3a3a3d" stroke-width=".9"/><path d="M283.3 567.8c.3-2 1.5-2.8 3-2.8v-1.3l2.3 2-2.3 2v-1.2c-1.3 0-2.2.3-3 1.3z" fill="#fff"/></g><path d="M302.2 571.8l2.3-2.3 2.3 2.3" fill="none" stroke="#555" stroke-width=".8"/><path d="M325.5 560.3l5 1.8v4.2c0 3-2.2 5-5 6-2.8-1-5-3-5-6v-4.2z" fill="#3a3a3d"/><circle cx="325.5" cy="566" r="2.3" fill="#fff"/><path d="M324 567l1.5-1.6 1.5 1.6" fill="none" stroke="#3a3a3d" stroke-width=".7"/><circle cx="357.5" cy="563" r="2.5" fill="#3a3a3d"/><path d="M352.5 572c0-3.8 2-5.2 5-5.2 1.3 0 2.3.3 3 .8-.8 1-1 2.8-.3 4.4z" fill="#3a3a3d"/><circle cx="362.8" cy="569.5" r="2.3" fill="none" stroke="#3a3a3d" stroke-width="1"/><circle cx="400.3" cy="563" r="2.7" fill="#3a3a3d"/><path d="M393.5 572.3c0-4 2.7-5.5 6.8-5.5s6.8 1.5 6.8 5.5z" fill="#3a3a3d"/><path d="M436.5 563.5h9.5a1 1 0 0 1 1 1v6a1 1 0 0 1-1 1h-4l-2.5 2v-2h-3a1 1 0 0 1-1-1v-6a1 1 0 0 1 1-1z" fill="#3a3a3d"/><rect x="435.5" y="559" width="16" height="7.8" rx="3.9" fill="#ee1c25"/><circle cx="474.5" cy="566.5" r="5.8" fill="none" stroke="#3a3a3d" stroke-width=".9"/><circle cx="474.5" cy="566.5" r="4" fill="#3a3a3d"/><path d="M491.4 571.8l2.3-2.3 2.3 2.3" fill="none" stroke="#555" stroke-width=".8"/><rect x="512.3" y="561.3" width="5.3" height="4.6" rx=".5" fill="#3a3a3d"/><rect x="509" y="567.3" width="5.3" height="4.6" rx=".5" fill="#3a3a3d"/><rect x="515.7" y="567.3" width="5.3" height="4.6" rx=".5" fill="#3a3a3d"/><rect x="543.5" y="561.5" width="4.6" height="4.6" rx=".6" fill="#3a3a3d"/><rect x="543.5" y="567.5" width="4.6" height="4.6" rx=".6" fill="#3a3a3d"/><rect x="549.5" y="567.5" width="4.6" height="4.6" rx=".6" fill="#3a3a3d"/><path d="M552 560.6l2.7 2.7-2.7 2.7-2.7-2.7z" fill="none" stroke="#3a3a3d" stroke-width=".8"/><rect x="581" y="560.3" width="3" height="12.4" rx=".5" fill="#3a3a3d" transform="rotate(0 582.5 566.5)"/><rect x="581" y="560.3" width="3" height="12.4" rx=".5" fill="#3a3a3d" transform="rotate(45 582.5 566.5)"/><rect x="581" y="560.3" width="3" height="12.4" rx=".5" fill="#3a3a3d" transform="rotate(90 582.5 566.5)"/><rect x="581" y="560.3" width="3" height="12.4" rx=".5" fill="#3a3a3d" transform="rotate(135 582.5 566.5)"/><circle cx="582.5" cy="566.5" r="4.6" fill="#3a3a3d"/><circle cx="582.5" cy="566.5" r="2.2" fill="#fff"/></svg>
<div class="t c" style="left:443.5px;top:562.8px;font-size:5.8px;color:#fff;font-weight:bold">99+</div>
<div class="t c" style="left:18.3px;top:578.8px;font-size:6.6px;color:#2c2c2f;">解除静音</div>
<div class="t c" style="left:59.5px;top:578.8px;font-size:6.6px;color:#2c2c2f;">开启视频</div>
<div class="t c" style="left:285.7px;top:578.8px;font-size:6.6px;color:#2c2c2f;">共享屏幕</div>
<div class="t c" style="left:325.5px;top:578.8px;font-size:6.6px;color:#2c2c2f;">安全</div>
<div class="t c" style="left:358.7px;top:578.8px;font-size:6.6px;color:#2c2c2f;">邀请</div>
<div class="t c" style="left:400.3px;top:578.8px;font-size:6.6px;color:#2c2c2f;">管理成员(99+)</div>
<div class="t c" style="left:441px;top:578.8px;font-size:6.6px;color:#2c2c2f;">聊天</div>
<div class="t c" style="left:474.5px;top:578.8px;font-size:6.6px;color:#2c2c2f;">录制</div>
<div class="t c" style="left:515px;top:578.8px;font-size:6.6px;color:#2c2c2f;">分组讨论</div>
<div class="t c" style="left:548.7px;top:578.8px;font-size:6.6px;color:#2c2c2f;">应用</div>
<div class="t c" style="left:582.5px;top:578.8px;font-size:6.6px;color:#2c2c2f;">设置</div>
<div class="a" style="left:822px;top:561.2px;width:43px;height:20.5px;border:.8px solid #f4767c;border-radius:2.5px;background:#fff"></div>
<div class="t c" style="left:843.5px;top:571.4px;font-size:7.3px;color:#f25a60;">结束会议</div>
<div class="a" style="left:906.3px;top:564.2px;width:40.5px;height:14.6px;border:.7px solid #d3d6e0;border-radius:2px;background:#fff"></div>
<div class="t c" style="left:926.55px;top:571.5px;font-size:6.7px;color:#1a6fe8;font-weight:500">全部手放下</div>
<div class="a" style="left:955.5px;top:564.2px;width:40.5px;height:14.6px;border:.7px solid #d3d6e0;border-radius:2px;background:#fff"></div>
<div class="t c" style="left:975.75px;top:571.5px;font-size:6.7px;color:#1a6fe8;font-weight:500">全体静音</div>
<div class="a" style="left:1005px;top:564.2px;width:40.5px;height:14.6px;border:.7px solid #d3d6e0;border-radius:2px;background:#fff"></div>
<div class="t c" style="left:1022.75px;top:571.5px;font-size:6.7px;color:#1a6fe8;font-weight:500">更多</div>
<svg style="left:1031.55px;top:570.6px" width="3.4" height="2.2" viewBox="0 0 3.4 2.2"><path d="M0 0h3.4L1.7 2.2z" fill="#1a6fe8"/></svg>
</body></html>
